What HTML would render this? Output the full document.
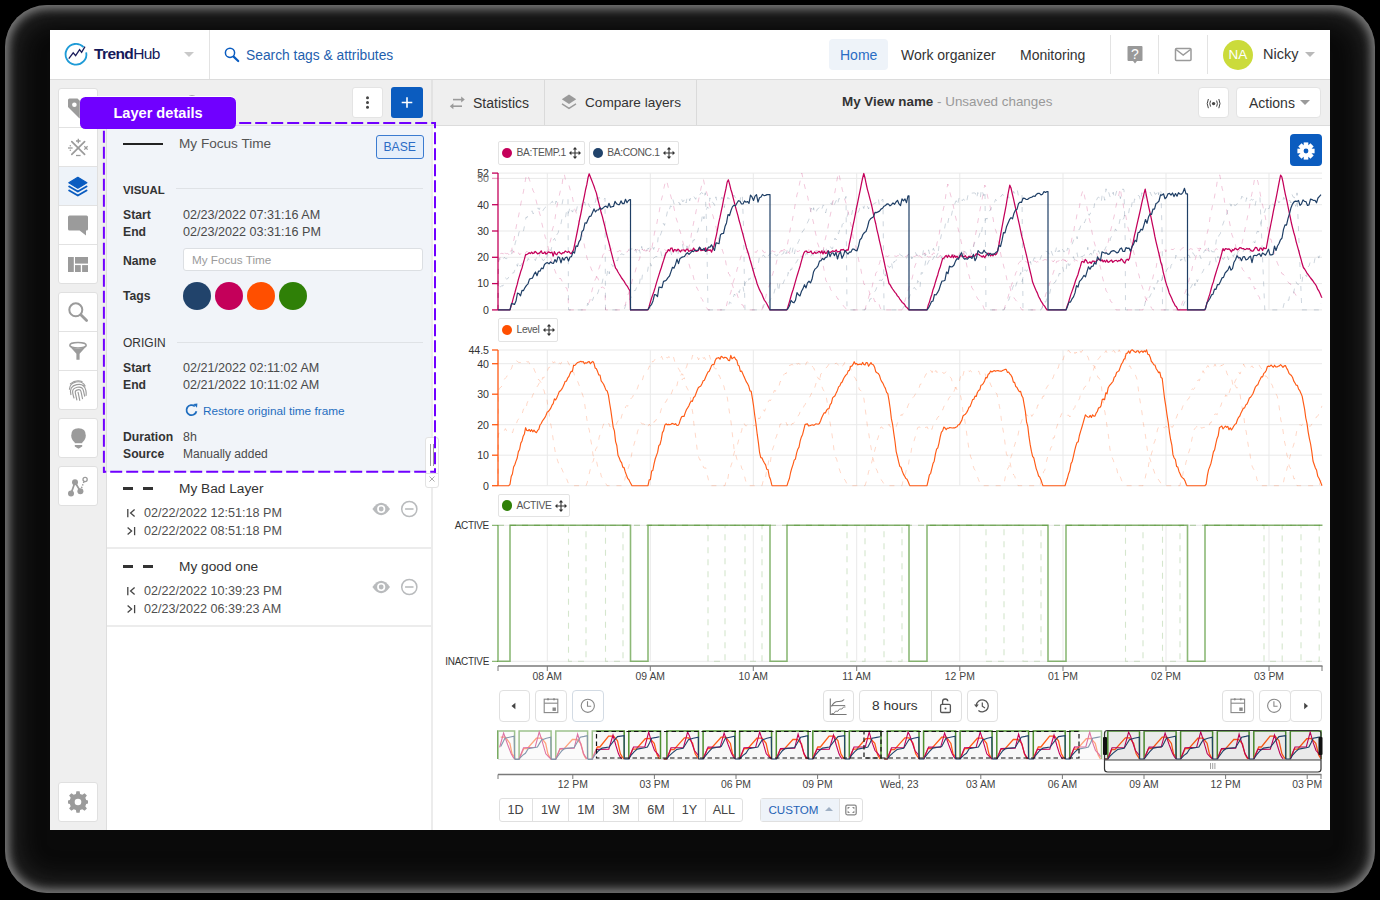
<!DOCTYPE html>
<html><head><meta charset="utf-8">
<style>
*{box-sizing:border-box;margin:0;padding:0}
html,body{width:1380px;height:900px;overflow:hidden;background:#000;font-family:"Liberation Sans",sans-serif;color:#333}
.a{position:absolute}
.t{position:absolute;white-space:nowrap}
.ring{left:5px;top:5px;width:1370px;height:888px;border-radius:42px;background:#0a0a0a;box-shadow:inset 0 0 8px 4px #7a7a7a,inset 0 0 30px 6px #323232}
.app{left:50px;top:30px;width:1280px;height:800px;background:#fff;box-shadow:none}
.hdr{left:50px;top:30px;width:1280px;height:50px;background:#fff;border-bottom:1px solid #dcdcdc}
.vd{position:absolute;width:1px;background:#e3e3e3}
.sb{left:50px;top:80px;width:57px;height:750px;background:#efefef}
.grp{position:absolute;left:58px;width:40px;background:#fff;border:1px solid #e0e0e0;border-radius:3px;overflow:hidden}
.grp .d{position:absolute;left:0;width:100%;height:1px;background:#e2e2e2}
.tb{left:431px;top:80px;width:899px;height:46px;background:#efefef;border-bottom:1px solid #dcdcdc;border-left:2px solid #e2e2e2}
.ph{left:107px;top:80px;width:325px;height:45px;background:#efefef}
.btn{position:absolute;background:#fff;border:1px solid #e0e0e0;border-radius:3px}
.lbl{font-weight:bold;color:#333;font-size:12.5px}
.val{color:#4a4a4a;font-size:12.6px}
</style></head><body>
<div class="a ring"></div>
<div class="a app"></div>

<!-- HEADER -->
<div class="a hdr"></div>
<svg class="a" style="left:62px;top:41px" width="28" height="28" viewBox="62 41 28 28">
  <path d="M83.6 47.2 A10.4 10.4 0 1 0 86.2 52.3" fill="none" stroke="#1e9bd7" stroke-width="1.8"/>
  <path d="M68.8 58.6 L73.2 52.8 L75.6 55.6 L79.6 49.6 L81.6 52.4 L85 46.6" fill="none" stroke="#1b1e5c" stroke-width="1.3" stroke-linejoin="miter"/>
</svg>
<div class="t" style="left:94px;top:45px;line-height:18px;font-size:15.5px;color:#15195a;letter-spacing:-0.6px"><b>Trend</b>Hub</div>
<svg class="a" style="left:183px;top:51px" width="12" height="7"><path d="M1 1 L11 1 L6 6Z" fill="#c9c9c9"/></svg>
<div class="vd" style="left:209px;top:30px;height:49px"></div>
<svg class="a" style="left:222px;top:44px" width="20" height="20" viewBox="222 44 20 20">
  <circle cx="230" cy="52.8" r="4.6" fill="none" stroke="#0a5cc0" stroke-width="1.5"/>
  <path d="M233.6 56.6 L238.2 61" stroke="#0a5cc0" stroke-width="2.2" stroke-linecap="round"/>
</svg>
<div class="t" style="left:246px;top:46px;line-height:20px;font-size:13.8px;color:#1f5fae">Search tags &amp; attributes</div>

<div class="a" style="left:829px;top:39px;width:59px;height:31px;background:#eef3f9;border-radius:4px"></div>
<div class="t" style="left:840px;top:45px;line-height:20px;font-size:14px;color:#2a6dc4">Home</div>
<div class="t" style="left:901px;top:45px;line-height:20px;font-size:14px;color:#333">Work organizer</div>
<div class="t" style="left:1020px;top:45px;line-height:20px;font-size:14px;color:#333">Monitoring</div>
<div class="vd" style="left:1110px;top:35px;height:39px"></div>
<div class="vd" style="left:1158px;top:35px;height:39px"></div>
<div class="vd" style="left:1207px;top:35px;height:39px"></div>
<svg class="a" style="left:1126px;top:45px" width="18" height="20" viewBox="1126 45 18 20">
  <path d="M1128.5 46 H1141.5 Q1142.5 46 1142.5 47 V60 Q1142.5 61 1141.5 61 H1137 L1135 63.5 L1133 61 H1128.5 Q1127.5 61 1127.5 60 V47 Q1127.5 46 1128.5 46Z" fill="#999"/>
  <text x="1135" y="59" font-size="14" fill="#fff" text-anchor="middle" font-family="Liberation Sans">?</text>
</svg>
<svg class="a" style="left:1173px;top:46px" width="20" height="18" viewBox="1173 46 20 18">
  <rect x="1175.5" y="48.5" width="15.5" height="12" rx="1" fill="none" stroke="#9a9a9a" stroke-width="1.5"/>
  <path d="M1176 49.5 L1183.2 55 L1190.5 49.5" fill="none" stroke="#9a9a9a" stroke-width="1.5"/>
</svg>
<div class="a" style="left:1223px;top:39.5px;width:30px;height:30px;border-radius:50%;background:#cbdb3b"></div>
<div class="t" style="left:1223px;top:45px;width:30px;text-align:center;line-height:20px;font-size:13.5px;color:#fff">NA</div>
<div class="t" style="left:1263px;top:44px;line-height:20px;font-size:14.5px;color:#333">Nicky</div>
<svg class="a" style="left:1304px;top:51px" width="12" height="7"><path d="M1 1 L11 1 L6 6Z" fill="#b9b9b9"/></svg>

<!-- SIDEBAR -->
<div class="a sb"></div>
<div class="vd" style="left:106px;top:125px;height:705px;background:#dedede"></div>
<div class="grp" style="top:88px;height:196px"><div class="a" style="left:0;top:78px;width:100%;height:39px;background:#eef3f9"></div><div class="d" style="top:38px"></div><div class="d" style="top:77px"></div><div class="d" style="top:116px"></div><div class="d" style="top:155px"></div></div>
<div class="grp" style="top:292px;height:118px"><div class="d" style="top:38px"></div><div class="d" style="top:77px"></div></div>
<div class="grp" style="top:418px;height:40px"></div>
<div class="grp" style="top:466px;height:40px"></div>
<div class="grp" style="top:782px;height:40px"></div>
<svg class="a" style="left:50px;top:80px" width="57" height="750" viewBox="50 80 57 750">
<path d="M68 100 Q68 98.5 69.5 98.5 L77.5 98.5 L88.5 109.5 L79.5 118.5 L68 107 Z" fill="#9b9b9b"/>
<circle cx="74.4" cy="104.8" r="2.3" fill="#fff"/>
<g stroke="#9b9b9b" stroke-width="1.7" fill="none" stroke-linecap="round">
<path d="M71.8 141.6 L84.6 154.4 M84.6 141.6 L71.8 154.4"/>
</g>
<g stroke="#9b9b9b" stroke-width="1.3" fill="none">
<path d="M76 141 H80.6 M78.3 138.7 V143.3"/>
<path d="M76 155.5 H80.6"/>
<path d="M68 148 H72.6"/>
<path d="M84.3 146.2 L87.6 149.6 M87.6 146.2 L84.3 149.6"/>
</g>
<circle cx="70.3" cy="145.8" r="0.75" fill="#9b9b9b"/><circle cx="70.3" cy="150.2" r="0.75" fill="#9b9b9b"/>
<path d="M77.85 177.3 L86.9 182.7 L77.85 188.2 L68.8 182.7 Z" fill="#0a5cc0" stroke="#0a5cc0" stroke-width="1.2" stroke-linejoin="round"/>
<path d="M69.2 186.5 L77.85 191.5 L86.5 186.5" fill="none" stroke="#0a5cc0" stroke-width="2" stroke-linecap="round" stroke-linejoin="round"/>
<path d="M69.2 190.5 L77.85 195.5 L86.5 190.5" fill="none" stroke="#0a5cc0" stroke-width="2" stroke-linecap="round" stroke-linejoin="round"/>
<path d="M69.5 215.5 H86.5 Q88 215.5 88 217 V229 Q88 230.5 86.5 230.5 H86 V235.4 L79.6 230.5 H69.5 Q68 230.5 68 229 V217 Q68 215.5 69.5 215.5Z" fill="#9b9b9b"/>
<rect x="68" y="257" width="5.8" height="15" fill="#9b9b9b"/>
<rect x="75" y="257" width="13" height="6.6" fill="#9b9b9b"/>
<rect x="75" y="265.1" width="5.8" height="6.9" fill="#9b9b9b"/>
<rect x="82.1" y="265.1" width="5.9" height="6.9" fill="#9b9b9b"/>
<circle cx="75.8" cy="309.8" r="6.5" fill="none" stroke="#9b9b9b" stroke-width="2"/>
<path d="M80.8 314.8 L86.6 320.6" stroke="#9b9b9b" stroke-width="2.8" stroke-linecap="round"/>
<path d="M69.4 346 L76.4 353.8 V359.8 H79.6 V353.8 L86.6 346 Q78 351.5 69.4 346Z" fill="#9b9b9b"/>
<ellipse cx="78" cy="345.3" rx="8.2" ry="2.7" fill="#fff" stroke="#9b9b9b" stroke-width="1.5"/>
<g fill="none" stroke="#9b9b9b" stroke-width="1.15" stroke-linecap="round" transform="rotate(-12 78 391)">
<path d="M72 382.5 Q78 379 84 382.5"/>
<path d="M70 387.5 Q71.5 381.8 78 381.8 Q84.5 381.8 86 387.5"/>
<path d="M70.3 393 Q70 384.5 78 384.5 Q85.8 384.5 85.8 392 Q85.8 395 85 397"/>
<path d="M72.6 397 Q72.4 395 72.4 392 Q72.4 387.2 78 387.2 Q83.4 387.2 83.4 392 V397.5"/>
<path d="M75 399.5 V392 Q75 389.8 78 389.8 Q80.8 389.8 80.8 392 V399.5"/>
<path d="M77.8 392.4 V400.5"/>
</g>
<path d="M78.5 428.2 Q85.8 428.2 85.8 435.4 Q85.8 439.2 82.2 442.6 H74.8 Q71.2 439.2 71.2 435.4 Q71.2 428.2 78.5 428.2Z" fill="#9b9b9b"/>
<rect x="74.8" y="442" width="7.4" height="1.2" fill="#9b9b9b"/>
<path d="M74.8 445 H82.2 V446.6 L78.5 448.8 L74.8 446.6Z" fill="#9b9b9b"/>
<path d="M71 493.6 L75 482.2 L80.4 491.2" fill="none" stroke="#9b9b9b" stroke-width="1.7"/>
<path d="M81.5 488 L84 481.5" fill="none" stroke="#9b9b9b" stroke-width="1.5" stroke-dasharray="1.4 1.3"/>
<circle cx="71" cy="493.6" r="3" fill="#9b9b9b"/>
<circle cx="75" cy="482.2" r="3" fill="#9b9b9b"/>
<circle cx="80.4" cy="491.2" r="3" fill="#9b9b9b"/>
<circle cx="85.1" cy="479.5" r="2.1" fill="none" stroke="#9b9b9b" stroke-width="1.3"/>
<g transform="translate(78 802)">
<path d="M-1.6 -9.5 H1.6 L2.1 -6.8 L4.3 -5.9 L6.6 -7.5 L8.9 -5.2 L7.3 -2.9 L8.2 -0.7 L10 -0.3 V2.9 L8.2 3.3 L7.3 5.5 L8.9 7.8 L6.6 10.1 L4.3 8.5 L2.1 9.4 L1.6 12 H-1.6 L-2.1 9.4 L-4.3 8.5 L-6.6 10.1 L-8.9 7.8 L-7.3 5.5 L-8.2 3.3 L-10 2.9 V-0.3 L-8.2 -0.7 L-7.3 -2.9 L-8.9 -5.2 L-6.6 -7.5 L-4.3 -5.9 L-2.1 -6.8Z" transform="translate(0 -1.3)" fill="#9b9b9b"/>
<circle cx="0" cy="0" r="3.3" fill="#fff"/>
</g>
</svg>

<!-- PANEL -->
<div class="a ph"></div>
<div class="a" style="left:107px;top:125px;width:325px;height:347px;background:#f1f4f9"></div>
<div class="a" style="left:107px;top:125px;width:325px;height:1px;background:#dedede"></div>
<div class="a" style="left:107px;top:472px;width:325px;height:358px;background:#fff"></div>
<div class="vd" style="left:431px;top:125px;width:2px;height:705px;background:#ececec"></div>
<div class="a" style="left:186px;top:94.5px;width:12px;height:12px;border-radius:50%;background:#a8a8a8"></div>
<div class="btn" style="left:352px;top:87px;width:31px;height:31px;border-color:#e4e4e4"></div>
<svg class="a" style="left:352px;top:87px" width="31" height="31"><circle cx="15.5" cy="10.8" r="1.5" fill="#444"/><circle cx="15.5" cy="15.5" r="1.5" fill="#444"/><circle cx="15.5" cy="20.2" r="1.5" fill="#444"/></svg>
<div class="a" style="left:391px;top:87px;width:32px;height:31px;background:#0b5cbf;border-radius:3px"></div>
<svg class="a" style="left:391px;top:87px" width="32" height="31"><path d="M16 10.2 V20.8 M10.7 15.5 H21.3" stroke="#fff" stroke-width="1.6"/></svg>
<div class="a" style="left:376px;top:134.5px;width:47.5px;height:24px;border:1.5px solid #3b7bd0;border-radius:3px;background:#e5eefa"></div>
<div class="t" style="left:376px;top:137.5px;line-height:18px;font-size:12.2px;color:#2b6cc5;width:47.5px;text-align:center;">BASE</div>
<div class="a" style="left:123px;top:142.5px;width:40px;height:2px;background:#222"></div>
<div class="t" style="left:179px;top:135.0px;line-height:18px;font-size:13.6px;color:#555;">My Focus Time</div>
<div class="t" style="left:123px;top:180.5px;line-height:18px;font-size:11.4px;color:#333;font-weight:bold;">VISUAL</div>
<div class="a" style="left:176px;top:188px;width:247px;height:1px;background:#dfe2e6"></div>
<div class="t" style="left:123px;top:206.0px;line-height:18px;font-size:12.2px;color:#333;font-weight:bold;">Start</div>
<div class="t" style="left:183px;top:206.0px;line-height:18px;font-size:12.6px;color:#4a4a4a;">02/23/2022 07:31:16 AM</div>
<div class="t" style="left:123px;top:223.0px;line-height:18px;font-size:12.2px;color:#333;font-weight:bold;">End</div>
<div class="t" style="left:183px;top:223.0px;line-height:18px;font-size:12.6px;color:#4a4a4a;">02/23/2022 03:31:16 PM</div>
<div class="t" style="left:123px;top:252.0px;line-height:18px;font-size:12.2px;color:#333;font-weight:bold;">Name</div>
<div class="a" style="left:183px;top:248px;width:240px;height:23px;background:#fff;border:1px solid #dcdfe3;border-radius:3px"></div>
<div class="t" style="left:192px;top:251.0px;line-height:18px;font-size:11.7px;color:#9b9b9b;">My Focus Time</div>
<div class="t" style="left:123px;top:287.0px;line-height:18px;font-size:12.2px;color:#333;font-weight:bold;">Tags</div>
<div class="a" style="left:183px;top:282px;width:28px;height:28px;border-radius:50%;background:#21436b"></div>
<div class="a" style="left:215px;top:282px;width:28px;height:28px;border-radius:50%;background:#c4005a"></div>
<div class="a" style="left:247px;top:282px;width:28px;height:28px;border-radius:50%;background:#ff4f00"></div>
<div class="a" style="left:279px;top:282px;width:28px;height:28px;border-radius:50%;background:#2f8007"></div>
<div class="t" style="left:123px;top:333.5px;line-height:18px;font-size:12px;color:#333;">ORIGIN</div>
<div class="a" style="left:177px;top:341.5px;width:246px;height:1px;background:#dfe2e6"></div>
<div class="t" style="left:123px;top:359.0px;line-height:18px;font-size:12.2px;color:#333;font-weight:bold;">Start</div>
<div class="t" style="left:183px;top:359.0px;line-height:18px;font-size:12.6px;color:#4a4a4a;">02/21/2022 02:11:02 AM</div>
<div class="t" style="left:123px;top:376.0px;line-height:18px;font-size:12.2px;color:#333;font-weight:bold;">End</div>
<div class="t" style="left:183px;top:376.0px;line-height:18px;font-size:12.6px;color:#4a4a4a;">02/21/2022 10:11:02 AM</div>
<svg class="a" style="left:183px;top:402px" width="18" height="18" viewBox="183 402 18 18"><path d="M196.4 411.2 A5 5 0 1 1 194.8 406.4" fill="none" stroke="#1f6dbf" stroke-width="1.8"/><path d="M193.4 404 L197.4 403.6 L197 407.8Z" fill="#1f6dbf"/></svg>
<div class="t" style="left:203px;top:401.5px;line-height:18px;font-size:11.8px;color:#1f6dbf;">Restore original time frame</div>
<div class="t" style="left:123px;top:427.5px;line-height:18px;font-size:12.2px;color:#333;font-weight:bold;">Duration</div>
<div class="t" style="left:183px;top:427.5px;line-height:18px;font-size:12.4px;color:#4a4a4a;">8h</div>
<div class="t" style="left:123px;top:444.5px;line-height:18px;font-size:12.2px;color:#333;font-weight:bold;">Source</div>
<div class="t" style="left:183px;top:444.5px;line-height:18px;font-size:12px;color:#4a4a4a;">Manually added</div>
<div class="a" style="left:425px;top:437px;width:14px;height:51px;background:#fff;border:1px solid #e3e3e3;border-radius:3px"></div>
<div class="a" style="left:425px;top:473px;width:14px;height:1px;background:#e3e3e3"></div>
<svg class="a" style="left:425px;top:437px" width="14" height="51"><path d="M5.5 7 V29 M8.5 7 V29" stroke="#999" stroke-width="1"/><path d="M4.5 39.5 L9.5 44.5 M9.5 39.5 L4.5 44.5" stroke="#aaa" stroke-width="1"/></svg>
<div class="a" style="left:123px;top:487.3px;width:10px;height:2.4px;background:#333"></div>
<div class="a" style="left:143px;top:487.3px;width:10px;height:2.4px;background:#333"></div>
<div class="t" style="left:179px;top:479.5px;line-height:18px;font-size:13.7px;color:#333;">My Bad Layer</div>
<svg class="a" style="left:124px;top:506.5px" width="14" height="12"><path d="M3.8 2 V10.2" stroke="#444" stroke-width="1.3"/><path d="M10.6 2.6 L6.6 6.1 L10.6 9.6" fill="none" stroke="#444" stroke-width="1.3"/></svg>
<svg class="a" style="left:124px;top:524.8px" width="14" height="12"><path d="M10.6 2 V10.2" stroke="#444" stroke-width="1.3"/><path d="M3.6 2.6 L7.6 6.1 L3.6 9.6" fill="none" stroke="#444" stroke-width="1.3"/></svg>
<div class="t" style="left:144px;top:503.5px;line-height:18px;font-size:12.6px;color:#4f4f4f;">02/22/2022 12:51:18 PM</div>
<div class="t" style="left:144px;top:521.8px;line-height:18px;font-size:12.6px;color:#4f4f4f;">02/22/2022 08:51:18 PM</div>
<svg class="a" style="left:370px;top:499px" width="52" height="20" viewBox="370 499 52 20"><path d="M372.4 509 Q381.2 496.5 390 509 Q381.2 521.5 372.4 509Z" fill="#b9bbbd"/><circle cx="381.2" cy="509" r="4.1" fill="#fff"/><circle cx="381.2" cy="509" r="2.4" fill="#b9bbbd"/><circle cx="409.3" cy="509" r="7.6" fill="none" stroke="#b9bbbd" stroke-width="1.5"/><path d="M405.1 509 H413.5" stroke="#b9bbbd" stroke-width="1.6"/></svg>
<div class="a" style="left:107px;top:547px;width:324px;height:2px;background:#ececec"></div>
<div class="a" style="left:123px;top:565.3px;width:10px;height:2.4px;background:#333"></div>
<div class="a" style="left:143px;top:565.3px;width:10px;height:2.4px;background:#333"></div>
<div class="t" style="left:179px;top:557.5px;line-height:18px;font-size:13.7px;color:#333;">My good one</div>
<svg class="a" style="left:124px;top:584.5px" width="14" height="12"><path d="M3.8 2 V10.2" stroke="#444" stroke-width="1.3"/><path d="M10.6 2.6 L6.6 6.1 L10.6 9.6" fill="none" stroke="#444" stroke-width="1.3"/></svg>
<svg class="a" style="left:124px;top:602.8px" width="14" height="12"><path d="M10.6 2 V10.2" stroke="#444" stroke-width="1.3"/><path d="M3.6 2.6 L7.6 6.1 L3.6 9.6" fill="none" stroke="#444" stroke-width="1.3"/></svg>
<div class="t" style="left:144px;top:581.5px;line-height:18px;font-size:12.6px;color:#4f4f4f;">02/22/2022 10:39:23 PM</div>
<div class="t" style="left:144px;top:599.8px;line-height:18px;font-size:12.6px;color:#4f4f4f;">02/23/2022 06:39:23 AM</div>
<svg class="a" style="left:370px;top:577px" width="52" height="20" viewBox="370 577 52 20"><path d="M372.4 587 Q381.2 574.5 390 587 Q381.2 599.5 372.4 587Z" fill="#b9bbbd"/><circle cx="381.2" cy="587" r="4.1" fill="#fff"/><circle cx="381.2" cy="587" r="2.4" fill="#b9bbbd"/><circle cx="409.3" cy="587" r="7.6" fill="none" stroke="#b9bbbd" stroke-width="1.5"/><path d="M405.1 587 H413.5" stroke="#b9bbbd" stroke-width="1.6"/></svg>
<div class="a" style="left:107px;top:625px;width:324px;height:2px;background:#ececec"></div>

<!-- CHART TOOLBAR -->
<div class="a tb"></div>
<div class="vd" style="left:543.5px;top:80px;height:45px;background:#dadada"></div>
<div class="vd" style="left:695.5px;top:80px;height:45px;background:#dadada"></div>
<svg class="a" style="left:446px;top:94px" width="22" height="18" viewBox="446 94 22 18"><path d="M453 99.6 H463" stroke="#9a9a9a" stroke-width="1.6"/><path d="M464.8 99.6 L461.2 96.6 V102.6Z" fill="#9a9a9a"/><path d="M452.5 106.2 H462" stroke="#9a9a9a" stroke-width="1.6"/><path d="M449.8 106.2 L453.4 103.2 V109.2Z" fill="#9a9a9a"/></svg>
<div class="t" style="left:473px;top:93.5px;line-height:18px;font-size:14px;color:#333;">Statistics</div>
<svg class="a" style="left:558px;top:92px" width="22" height="20" viewBox="558 92 22 20"><path d="M569 94.4 L576.2 99.2 L569 104 L561.8 99.2Z" fill="#9a9a9a"/><path d="M562 103.8 L569 108.4 L576 103.8" fill="none" stroke="#9a9a9a" stroke-width="1.4"/></svg>
<div class="t" style="left:585px;top:93.5px;line-height:18px;font-size:13.6px;color:#333;">Compare layers</div>
<div class="t" style="left:842px;top:93.0px;line-height:18px;font-size:13.4px;color:#333;"><b>My View name</b> <span style="color:#999">- Unsaved changes</span></div>
<div class="a" style="left:1198px;top:87px;width:31px;height:31px;background:#fff;border:1px solid #e3e3e3;border-radius:4px"></div>
<svg class="a" style="left:1203px;top:94px" width="22" height="20" viewBox="1203 94 22 20"><circle cx="1213.6" cy="103.6" r="1.7" fill="#444"/><path d="M1210.6 100.6 Q1209 103.6 1210.6 106.6 M1216.6 100.6 Q1218.2 103.6 1216.6 106.6" fill="none" stroke="#444" stroke-width="1"/><path d="M1208.4 99 Q1206 103.6 1208.4 108.2 M1218.8 99 Q1221.2 103.6 1218.8 108.2" fill="none" stroke="#444" stroke-width="1"/></svg>
<div class="a" style="left:1236px;top:87px;width:85px;height:31px;background:#fff;border:1px solid #e3e3e3;border-radius:4px"></div>
<div class="t" style="left:1249px;top:93.5px;line-height:18px;font-size:14px;color:#333;">Actions</div>
<svg class="a" style="left:1299px;top:99px" width="12" height="7"><path d="M1 1 L11 1 L6 6Z" fill="#9a9a9a"/></svg>
<div class="a" style="left:1290px;top:134px;width:32px;height:32px;background:#0b5cbf;border-radius:4px"></div>
<svg class="a" style="left:1290px;top:134px" width="32" height="32" viewBox="-16 -17 32 32"><rect x="-2.3" y="-8.6" width="4.6" height="4" transform="rotate(0)" fill="#fff"/><rect x="-2.3" y="-8.6" width="4.6" height="4" transform="rotate(45)" fill="#fff"/><rect x="-2.3" y="-8.6" width="4.6" height="4" transform="rotate(90)" fill="#fff"/><rect x="-2.3" y="-8.6" width="4.6" height="4" transform="rotate(135)" fill="#fff"/><rect x="-2.3" y="-8.6" width="4.6" height="4" transform="rotate(180)" fill="#fff"/><rect x="-2.3" y="-8.6" width="4.6" height="4" transform="rotate(225)" fill="#fff"/><rect x="-2.3" y="-8.6" width="4.6" height="4" transform="rotate(270)" fill="#fff"/><rect x="-2.3" y="-8.6" width="4.6" height="4" transform="rotate(315)" fill="#fff"/><circle r="6.2" fill="#fff"/><circle r="2.4" fill="#0b5cbf"/></svg>

<svg class="a" style="left:432px;top:126px" width="898" height="704" viewBox="432 126 898 704" font-family="Liberation Sans">
<line x1="498.0" x2="1322.0" y1="173.1" y2="173.1" stroke="#e9e9e9" stroke-width="1"/>
<line x1="498.0" x2="1322.0" y1="178.4" y2="178.4" stroke="#e9e9e9" stroke-width="1"/>
<line x1="498.0" x2="1322.0" y1="204.7" y2="204.7" stroke="#e9e9e9" stroke-width="1"/>
<line x1="498.0" x2="1322.0" y1="231.0" y2="231.0" stroke="#e9e9e9" stroke-width="1"/>
<line x1="498.0" x2="1322.0" y1="257.3" y2="257.3" stroke="#e9e9e9" stroke-width="1"/>
<line x1="498.0" x2="1322.0" y1="283.6" y2="283.6" stroke="#e9e9e9" stroke-width="1"/>
<line x1="498.0" x2="1322.0" y1="309.9" y2="309.9" stroke="#e9e9e9" stroke-width="1"/>
<line x1="547.3" x2="547.3" y1="173.1" y2="309.9" stroke="#e9e9e9" stroke-width="1"/>
<line x1="650.3" x2="650.3" y1="173.1" y2="309.9" stroke="#e9e9e9" stroke-width="1"/>
<line x1="753.3" x2="753.3" y1="173.1" y2="309.9" stroke="#e9e9e9" stroke-width="1"/>
<line x1="856.7" x2="856.7" y1="173.1" y2="309.9" stroke="#e9e9e9" stroke-width="1"/>
<line x1="959.8" x2="959.8" y1="173.1" y2="309.9" stroke="#e9e9e9" stroke-width="1"/>
<line x1="1063" x2="1063" y1="173.1" y2="309.9" stroke="#e9e9e9" stroke-width="1"/>
<line x1="1166" x2="1166" y1="173.1" y2="309.9" stroke="#e9e9e9" stroke-width="1"/>
<line x1="1269" x2="1269" y1="173.1" y2="309.9" stroke="#e9e9e9" stroke-width="1"/>
<text x="489" y="176.9" font-size="10.6" fill="#333" text-anchor="end">52</text>
<line x1="492" x2="498" y1="173.1" y2="173.1" stroke="#c4005a" stroke-width="1.3" stroke-opacity="1"/>
<text x="489" y="182.2" font-size="10.6" fill="#777" text-anchor="end">50</text>
<line x1="492" x2="498" y1="178.4" y2="178.4" stroke="#c4005a" stroke-width="1.3" stroke-opacity="0.35"/>
<text x="489" y="208.5" font-size="10.6" fill="#333" text-anchor="end">40</text>
<line x1="492" x2="498" y1="204.7" y2="204.7" stroke="#c4005a" stroke-width="1.3" stroke-opacity="1"/>
<text x="489" y="234.8" font-size="10.6" fill="#333" text-anchor="end">30</text>
<line x1="492" x2="498" y1="231.0" y2="231.0" stroke="#c4005a" stroke-width="1.3" stroke-opacity="1"/>
<text x="489" y="261.1" font-size="10.6" fill="#333" text-anchor="end">20</text>
<line x1="492" x2="498" y1="257.3" y2="257.3" stroke="#c4005a" stroke-width="1.3" stroke-opacity="1"/>
<text x="489" y="287.4" font-size="10.6" fill="#333" text-anchor="end">10</text>
<line x1="492" x2="498" y1="283.6" y2="283.6" stroke="#c4005a" stroke-width="1.3" stroke-opacity="1"/>
<text x="489" y="313.7" font-size="10.6" fill="#333" text-anchor="end">0</text>
<line x1="492" x2="498" y1="309.9" y2="309.9" stroke="#c4005a" stroke-width="1.3" stroke-opacity="1"/>
<line x1="498.0" x2="1322.0" y1="350.0" y2="350.0" stroke="#e9e9e9" stroke-width="1"/>
<line x1="498.0" x2="1322.0" y1="363.7" y2="363.7" stroke="#e9e9e9" stroke-width="1"/>
<line x1="498.0" x2="1322.0" y1="394.2" y2="394.2" stroke="#e9e9e9" stroke-width="1"/>
<line x1="498.0" x2="1322.0" y1="424.7" y2="424.7" stroke="#e9e9e9" stroke-width="1"/>
<line x1="498.0" x2="1322.0" y1="455.2" y2="455.2" stroke="#e9e9e9" stroke-width="1"/>
<line x1="498.0" x2="1322.0" y1="485.7" y2="485.7" stroke="#e9e9e9" stroke-width="1"/>
<line x1="547.3" x2="547.3" y1="350.0" y2="485.7" stroke="#e9e9e9" stroke-width="1"/>
<line x1="650.3" x2="650.3" y1="350.0" y2="485.7" stroke="#e9e9e9" stroke-width="1"/>
<line x1="753.3" x2="753.3" y1="350.0" y2="485.7" stroke="#e9e9e9" stroke-width="1"/>
<line x1="856.7" x2="856.7" y1="350.0" y2="485.7" stroke="#e9e9e9" stroke-width="1"/>
<line x1="959.8" x2="959.8" y1="350.0" y2="485.7" stroke="#e9e9e9" stroke-width="1"/>
<line x1="1063" x2="1063" y1="350.0" y2="485.7" stroke="#e9e9e9" stroke-width="1"/>
<line x1="1166" x2="1166" y1="350.0" y2="485.7" stroke="#e9e9e9" stroke-width="1"/>
<line x1="1269" x2="1269" y1="350.0" y2="485.7" stroke="#e9e9e9" stroke-width="1"/>
<text x="489" y="353.8" font-size="10.6" fill="#333" text-anchor="end">44.5</text>
<line x1="492" x2="498" y1="350.0" y2="350.0" stroke="#ff5a14" stroke-width="1.3"/>
<text x="489" y="367.5" font-size="10.6" fill="#333" text-anchor="end">40</text>
<line x1="492" x2="498" y1="363.7" y2="363.7" stroke="#ff5a14" stroke-width="1.3"/>
<text x="489" y="398.0" font-size="10.6" fill="#333" text-anchor="end">30</text>
<line x1="492" x2="498" y1="394.2" y2="394.2" stroke="#ff5a14" stroke-width="1.3"/>
<text x="489" y="428.5" font-size="10.6" fill="#333" text-anchor="end">20</text>
<line x1="492" x2="498" y1="424.7" y2="424.7" stroke="#ff5a14" stroke-width="1.3"/>
<text x="489" y="459.0" font-size="10.6" fill="#333" text-anchor="end">10</text>
<line x1="492" x2="498" y1="455.2" y2="455.2" stroke="#ff5a14" stroke-width="1.3"/>
<text x="489" y="489.5" font-size="10.6" fill="#333" text-anchor="end">0</text>
<line x1="492" x2="498" y1="485.7" y2="485.7" stroke="#ff5a14" stroke-width="1.3"/>
<line x1="498.0" x2="1322.0" y1="525.3" y2="525.3" stroke="#e9e9e9" stroke-width="1"/>
<line x1="498.0" x2="1322.0" y1="661.3" y2="661.3" stroke="#e9e9e9" stroke-width="1"/>
<line x1="547.3" x2="547.3" y1="525.3" y2="661.3" stroke="#e9e9e9" stroke-width="1"/>
<line x1="650.3" x2="650.3" y1="525.3" y2="661.3" stroke="#e9e9e9" stroke-width="1"/>
<line x1="753.3" x2="753.3" y1="525.3" y2="661.3" stroke="#e9e9e9" stroke-width="1"/>
<line x1="856.7" x2="856.7" y1="525.3" y2="661.3" stroke="#e9e9e9" stroke-width="1"/>
<line x1="959.8" x2="959.8" y1="525.3" y2="661.3" stroke="#e9e9e9" stroke-width="1"/>
<line x1="1063" x2="1063" y1="525.3" y2="661.3" stroke="#e9e9e9" stroke-width="1"/>
<line x1="1166" x2="1166" y1="525.3" y2="661.3" stroke="#e9e9e9" stroke-width="1"/>
<line x1="1269" x2="1269" y1="525.3" y2="661.3" stroke="#e9e9e9" stroke-width="1"/>
<path d="M492 525.3 H498 M492 661.3 H498" stroke="#2f8007" stroke-opacity="0.55" stroke-width="1.3"/>
<text x="489" y="528.9" font-size="10" letter-spacing="-0.3" fill="#333" text-anchor="end">ACTIVE</text>
<text x="489" y="664.9" font-size="10" letter-spacing="-0.3" fill="#333" text-anchor="end">INACTIVE</text>
<line x1="498.0" x2="1322.5" y1="666" y2="666" stroke="#7a7a7a" stroke-width="1.4"/>
<line x1="498.0" x2="498.0" y1="666" y2="671" stroke="#7a7a7a" stroke-width="1"/>
<line x1="547.3" x2="547.3" y1="666" y2="671" stroke="#7a7a7a" stroke-width="1"/>
<line x1="650.3" x2="650.3" y1="666" y2="671" stroke="#7a7a7a" stroke-width="1"/>
<line x1="753.3" x2="753.3" y1="666" y2="671" stroke="#7a7a7a" stroke-width="1"/>
<line x1="856.7" x2="856.7" y1="666" y2="671" stroke="#7a7a7a" stroke-width="1"/>
<line x1="959.8" x2="959.8" y1="666" y2="671" stroke="#7a7a7a" stroke-width="1"/>
<line x1="1063" x2="1063" y1="666" y2="671" stroke="#7a7a7a" stroke-width="1"/>
<line x1="1166" x2="1166" y1="666" y2="671" stroke="#7a7a7a" stroke-width="1"/>
<line x1="1269" x2="1269" y1="666" y2="671" stroke="#7a7a7a" stroke-width="1"/>
<line x1="1322.0" x2="1322.0" y1="666" y2="671" stroke="#7a7a7a" stroke-width="1"/>
<text x="547.3" y="680" font-size="10.4" fill="#444" text-anchor="middle">08 AM</text>
<text x="650.3" y="680" font-size="10.4" fill="#444" text-anchor="middle">09 AM</text>
<text x="753.3" y="680" font-size="10.4" fill="#444" text-anchor="middle">10 AM</text>
<text x="856.7" y="680" font-size="10.4" fill="#444" text-anchor="middle">11 AM</text>
<text x="959.8" y="680" font-size="10.4" fill="#444" text-anchor="middle">12 PM</text>
<text x="1063" y="680" font-size="10.4" fill="#444" text-anchor="middle">01 PM</text>
<text x="1166" y="680" font-size="10.4" fill="#444" text-anchor="middle">02 PM</text>
<text x="1269" y="680" font-size="10.4" fill="#444" text-anchor="middle">03 PM</text>
<path d="M498.0 309.9 L498.2 263.1 L499.4 259.7 L500.6 255.9 L501.8 254.6 L503.0 254.2 L504.2 252.7 L505.4 253.3 L506.6 253.7 L507.8 253.5 L509.0 254.7 L510.2 251.9 L511.4 254.5 L512.6 253.1 L513.8 250.9 L515.0 255.8 L516.2 254.6 L517.4 253.8 L518.6 252.9 L519.8 254.8 L521.0 253.3 L522.2 253.0 L523.4 252.8 L524.6 255.5 L525.8 252.3 L527.0 251.2 L528.2 252.4 L529.4 253.6 L530.6 253.5 L531.8 255.6 L533.0 252.3 L534.2 251.2 L535.4 252.1 L536.6 255.9 L537.8 253.2 L539.0 252.8 L540.2 253.2 L541.4 251.6 L542.6 254.5 L543.8 253.4 L545.0 252.0 L546.2 251.6 L547.4 252.4 L548.6 248.5 L549.8 243.1 L551.0 238.8 L552.2 230.4 L553.4 226.3 L554.6 221.5 L555.8 213.4 L557.0 206.0 L558.2 200.9 L559.4 194.9 L560.6 189.8 L561.8 186.7 L563.0 177.4 L564.2 173.5 L565.4 179.7 L566.6 180.9 L567.8 184.3 L569.0 185.5 L570.2 189.8 L571.4 193.3 L572.6 198.1 L573.8 204.5 L575.0 209.9 L576.2 212.5 L577.4 217.6 L578.6 222.1 L579.8 227.0 L581.0 232.1 L582.2 235.7 L583.4 240.8 L584.6 246.4 L585.8 252.5 L587.0 257.9 L588.2 261.4 L589.4 264.8 L590.6 267.0 L591.8 270.4 L593.0 271.1 L594.2 272.5 L595.4 273.2 L596.6 277.3 L597.8 277.9 L599.0 281.2 L600.2 284.6 L601.4 287.6 L602.6 286.9 L603.8 288.2 L605.0 288.4 L605.5 309.9 L623.0 309.9 L624.2 306.2 L625.4 304.8 L626.6 298.0 L627.8 295.0 L629.0 292.1 L630.2 285.2 L631.4 283.8 L632.6 278.8 L633.8 275.8 L635.0 272.4 L636.2 268.1 L637.4 263.2 L638.6 261.0 L639.8 258.2 L641.0 250.7 L642.2 249.0 L643.4 250.5 L644.6 249.6 L645.8 251.2 L647.0 249.6 L648.2 248.7 L649.4 251.7 L650.6 248.7 L651.8 248.8 L653.0 250.0 L654.2 249.7 L655.4 250.1 L656.6 250.3 L657.8 251.8 L659.0 248.2 L660.2 250.6 L661.4 249.8 L662.6 250.2 L663.8 249.6 L665.0 249.5 L666.2 251.2 L667.4 249.8 L668.6 250.5 L669.8 251.1 L671.0 248.9 L672.2 249.0 L673.4 251.3 L674.6 250.7 L675.8 251.4 L677.0 251.6 L678.2 251.5 L679.4 249.9 L680.6 252.0 L681.8 252.1 L683.0 250.3 L684.2 251.4 L685.4 249.4 L686.6 251.7 L687.8 251.2 L689.0 246.7 L690.2 242.6 L691.4 234.0 L692.6 227.8 L693.8 221.8 L695.0 217.2 L696.2 210.5 L697.4 205.6 L698.6 199.7 L699.8 194.7 L701.0 188.2 L702.2 183.2 L703.4 179.3 L704.6 185.2 L705.8 190.1 L707.0 193.6 L708.2 198.1 L709.4 204.4 L710.6 208.3 L711.8 212.3 L713.0 215.8 L714.2 220.2 L715.4 224.5 L716.6 230.1 L717.8 235.2 L719.0 240.4 L720.2 242.9 L721.4 247.6 L722.6 250.8 L723.8 254.4 L725.0 257.4 L726.2 264.6 L727.4 267.2 L728.6 273.7 L729.8 274.9 L731.0 281.4 L732.2 284.2 L733.4 287.9 L734.6 287.8 L735.8 291.6 L737.0 293.9 L738.2 297.7 L739.4 299.7 L740.6 303.3 L741.8 304.8 L743.0 305.0 L744.2 308.5 L745.0 309.9 L762.0 309.9 L763.2 304.7 L764.4 301.1 L765.6 297.7 L766.8 292.3 L768.0 290.0 L769.2 285.7 L770.4 283.3 L771.6 277.2 L772.8 273.8 L774.0 269.4 L775.2 267.8 L776.4 262.6 L777.6 257.4 L778.8 254.5 L780.0 251.9 L781.2 250.3 L782.4 252.5 L783.6 251.9 L784.8 252.8 L786.0 252.8 L787.2 253.8 L788.4 251.7 L789.6 253.6 L790.8 252.7 L792.0 252.7 L793.2 253.3 L794.4 252.8 L795.6 252.1 L796.8 250.8 L798.0 251.9 L799.2 250.5 L800.4 251.5 L801.6 251.6 L802.8 251.2 L804.0 252.0 L805.2 250.7 L806.4 251.4 L807.6 251.4 L808.8 249.6 L810.0 252.3 L811.2 252.4 L812.4 251.4 L813.6 251.0 L814.8 251.5 L816.0 250.2 L817.2 250.7 L818.4 250.7 L819.6 252.3 L820.8 249.2 L822.0 250.8 L823.2 250.8 L824.4 242.5 L825.6 237.9 L826.8 232.7 L828.0 227.1 L829.2 220.0 L830.4 214.7 L831.6 209.1 L832.8 202.2 L834.0 196.3 L835.2 190.7 L836.4 183.2 L837.6 176.7 L838.8 172.5 L840.0 179.3 L841.2 184.3 L842.4 190.3 L843.6 193.8 L844.8 199.5 L846.0 203.2 L847.2 208.6 L848.4 213.0 L849.6 219.1 L850.8 224.0 L852.0 229.2 L853.2 237.7 L854.4 241.7 L855.6 245.7 L856.8 251.4 L858.0 256.6 L859.2 262.7 L860.4 266.8 L861.6 273.4 L862.8 278.6 L864.0 284.3 L865.2 284.7 L866.4 286.3 L867.6 288.9 L868.8 290.2 L870.0 294.4 L871.2 293.0 L872.4 297.8 L873.6 298.1 L874.8 301.7 L876.0 301.3 L877.2 302.7 L878.4 301.3 L879.6 306.1 L880.8 309.0 L882.0 307.6 L883.2 309.0 L884.0 309.9 L902.0 309.9 L903.2 307.9 L904.4 302.5 L905.6 298.5 L906.8 294.1 L908.0 290.6 L909.2 286.5 L910.4 282.1 L911.6 280.3 L912.8 275.5 L914.0 269.1 L915.2 265.3 L916.4 262.4 L917.6 258.1 L918.8 256.2 L920.0 255.7 L921.2 257.2 L922.4 257.8 L923.6 255.8 L924.8 257.3 L926.0 257.8 L927.2 256.2 L928.4 257.0 L929.6 256.8 L930.8 256.8 L932.0 255.8 L933.2 256.4 L934.4 256.4 L935.6 257.9 L936.8 257.9 L938.0 257.5 L939.2 256.9 L940.4 255.0 L941.6 256.7 L942.8 256.5 L944.0 253.9 L945.2 255.6 L946.4 256.3 L947.6 255.1 L948.8 255.6 L950.0 254.1 L951.2 254.8 L952.4 256.4 L953.6 254.2 L954.8 256.6 L956.0 253.2 L957.2 254.6 L958.4 257.3 L959.6 252.7 L960.8 255.7 L962.0 257.3 L963.2 252.8 L964.4 255.7 L965.6 254.9 L966.8 254.9 L968.0 254.5 L969.2 253.9 L970.4 256.4 L971.6 251.7 L972.8 249.3 L974.0 243.5 L975.2 236.3 L976.4 230.3 L977.6 223.0 L978.8 216.6 L980.0 209.9 L981.2 203.7 L982.4 197.8 L983.6 190.9 L984.8 185.0 L986.0 187.3 L987.2 194.6 L988.4 200.0 L989.6 202.8 L990.8 210.7 L992.0 213.9 L993.2 218.8 L994.4 227.3 L995.6 229.9 L996.8 233.7 L998.0 241.2 L999.2 244.1 L1000.4 252.1 L1001.6 258.5 L1002.8 262.3 L1004.0 267.4 L1005.2 270.7 L1006.4 277.1 L1007.6 282.8 L1008.8 286.3 L1010.0 286.9 L1011.2 293.0 L1012.4 295.2 L1013.6 297.0 L1014.8 299.2 L1016.0 300.3 L1017.2 301.6 L1018.4 305.4 L1019.6 305.9 L1020.8 308.1 L1022.0 309.9 L1041.0 309.9 L1042.2 307.9 L1043.4 301.6 L1044.6 298.9 L1045.8 294.1 L1047.0 290.8 L1048.2 290.0 L1049.4 283.7 L1050.6 281.2 L1051.8 277.7 L1053.0 273.5 L1054.2 270.0 L1055.4 265.9 L1056.6 261.4 L1057.8 261.2 L1059.0 260.9 L1060.2 259.6 L1061.4 261.4 L1062.6 260.7 L1063.8 261.0 L1065.0 259.8 L1066.2 262.0 L1067.4 260.7 L1068.6 259.9 L1069.8 260.6 L1071.0 260.3 L1072.2 261.0 L1073.4 260.3 L1074.6 261.0 L1075.8 259.9 L1077.0 260.8 L1078.2 261.2 L1079.4 260.7 L1080.6 261.2 L1081.8 257.9 L1083.0 260.0 L1084.2 260.5 L1085.4 260.9 L1086.6 259.7 L1087.8 261.1 L1089.0 261.0 L1090.2 261.2 L1091.4 260.9 L1092.6 260.9 L1093.8 261.6 L1095.0 260.2 L1096.2 261.7 L1097.4 259.9 L1098.6 259.3 L1099.8 261.1 L1101.0 261.0 L1102.2 259.3 L1103.4 261.0 L1104.6 257.6 L1105.8 252.4 L1107.0 247.2 L1108.2 242.4 L1109.4 235.6 L1110.6 230.8 L1111.8 225.9 L1113.0 220.5 L1114.2 216.0 L1115.4 208.8 L1116.6 203.6 L1117.8 197.1 L1119.0 194.1 L1120.2 187.9 L1121.4 195.4 L1122.6 199.9 L1123.8 208.8 L1125.0 212.5 L1126.2 217.9 L1127.4 225.9 L1128.6 229.5 L1129.8 234.7 L1131.0 242.4 L1132.2 245.5 L1133.4 251.1 L1134.6 255.6 L1135.8 262.1 L1137.0 267.9 L1138.2 272.3 L1139.4 276.7 L1140.6 284.2 L1141.8 285.3 L1143.0 288.8 L1144.2 292.1 L1145.4 298.2 L1146.6 299.5 L1147.8 301.1 L1149.0 303.4 L1150.2 304.6 L1151.4 308.1 L1152.6 309.2 L1153.0 309.9 L1180.0 309.9 L1181.2 306.2 L1182.4 302.5 L1183.6 299.7 L1184.8 293.3 L1186.0 290.3 L1187.2 284.0 L1188.4 282.4 L1189.6 277.6 L1190.8 274.3 L1192.0 269.3 L1193.2 262.7 L1194.4 261.9 L1195.6 258.4 L1196.8 253.0 L1198.0 249.1 L1199.2 251.2 L1200.4 248.4 L1201.6 250.5 L1202.8 248.4 L1204.0 249.2 L1205.2 249.9 L1206.4 248.9 L1207.6 250.0 L1208.8 250.7 L1210.0 249.9 L1211.2 249.4 L1212.4 250.6 L1213.6 249.2 L1214.8 250.4 L1216.0 248.6 L1217.2 249.3 L1218.4 249.6 L1219.6 251.7 L1220.8 248.9 L1222.0 251.4 L1223.2 249.9 L1224.4 250.7 L1225.6 247.6 L1226.8 249.3 L1228.0 248.9 L1229.2 248.5 L1230.4 249.5 L1231.6 248.4 L1232.8 250.5 L1234.0 248.1 L1235.2 248.4 L1236.4 249.0 L1237.6 251.1 L1238.8 250.9 L1240.0 250.2 L1241.2 248.5 L1242.4 241.3 L1243.6 236.1 L1244.8 230.1 L1246.0 223.8 L1247.2 218.4 L1248.4 212.4 L1249.6 205.9 L1250.8 198.6 L1252.0 193.3 L1253.2 187.0 L1254.4 179.8 L1255.6 176.9 L1256.8 178.1 L1258.0 182.2 L1259.2 188.2 L1260.4 194.8 L1261.6 201.6 L1262.8 205.7 L1264.0 211.4 L1265.2 216.2 L1266.4 223.7 L1267.6 227.8 L1268.8 234.0 L1270.0 239.0 L1271.2 239.5 L1272.4 246.4 L1273.6 249.5 L1274.8 254.2 L1276.0 259.2 L1277.2 262.5 L1278.4 265.4 L1279.6 269.5 L1280.8 270.7 L1282.0 273.9 L1283.2 274.1 L1284.4 275.6 L1285.6 278.3 L1286.8 280.0 L1288.0 282.0 L1289.2 283.3 L1290.4 283.7 L1291.6 287.1 L1292.8 289.5 L1294.0 292.7 L1295.2 293.7 L1296.4 296.3 L1297.0 298.2" fill="none" stroke="#c4005a" stroke-width="1" stroke-opacity="0.22" stroke-dasharray="5 7"/>
<path d="M498.0 309.9 L498.2 292.5 L499.4 286.3 L500.6 286.7 L501.8 285.8 L503.0 286.0 L504.2 281.2 L505.4 277.9 L506.6 279.0 L507.8 278.7 L509.0 276.6 L510.2 274.4 L511.4 275.6 L512.6 272.9 L513.8 272.9 L515.0 269.5 L516.2 263.8 L517.4 266.3 L518.6 260.8 L519.8 265.9 L521.0 265.7 L522.2 262.7 L523.4 261.5 L524.6 260.5 L525.8 260.2 L527.0 261.6 L528.2 258.4 L529.4 260.5 L530.6 258.3 L531.8 258.6 L533.0 258.8 L534.2 258.6 L535.4 260.5 L536.6 257.2 L537.8 256.8 L539.0 259.1 L540.2 251.6 L541.4 256.9 L542.6 260.1 L543.8 260.5 L545.0 258.5 L546.2 261.4 L547.4 254.2 L548.6 255.1 L549.8 249.1 L551.0 250.7 L552.2 244.3 L553.4 239.8 L554.6 238.4 L555.8 241.3 L557.0 234.4 L558.2 232.8 L559.4 226.5 L560.6 225.6 L561.8 219.5 L563.0 220.9 L564.2 221.2 L565.4 218.1 L566.6 210.5 L567.8 214.5 L569.0 211.3 L570.2 206.0 L571.4 210.6 L572.6 212.1 L573.8 207.5 L575.0 208.1 L576.2 211.3 L577.4 206.1 L578.6 206.9 L579.8 205.2 L581.0 207.9 L582.2 203.1 L583.4 206.5 L584.6 201.8 L585.8 207.0 L587.0 203.4 L588.2 203.0 L589.4 206.5 L590.6 207.6 L591.8 204.5 L593.0 204.4 L594.2 203.7 L595.4 202.2 L596.6 196.3 L597.8 200.8 L599.0 197.1 L600.2 199.7 L601.4 197.6 L602.6 198.6 L603.8 199.5 L605.0 198.2 L605.5 309.9 L605.5 309.9 L606.7 309.9 L607.9 309.9 L609.1 309.9 L610.3 309.9 L611.5 309.9 L612.7 309.9 L613.9 309.9 L615.1 309.9 L616.3 309.9 L617.5 309.9 L618.7 309.9 L619.9 309.9 L621.1 309.9 L622.3 309.9 L623.5 309.0 L624.7 308.3 L625.9 304.4 L627.1 304.3 L628.3 299.4 L629.5 299.6 L630.7 296.6 L631.9 297.6 L633.1 294.0 L634.3 290.5 L635.5 290.4 L636.7 286.9 L637.9 285.2 L639.1 286.3 L640.3 278.1 L641.5 282.0 L642.7 272.9 L643.9 272.6 L645.1 271.8 L646.3 271.5 L647.5 271.7 L648.7 264.1 L649.9 261.5 L651.1 266.2 L652.3 258.5 L653.5 258.4 L654.7 257.3 L655.9 256.5 L657.1 256.6 L658.3 254.8 L659.5 253.8 L660.7 250.9 L661.9 256.8 L663.1 253.0 L664.3 255.8 L665.5 252.7 L666.7 253.3 L667.9 254.1 L669.1 250.6 L670.3 250.2 L671.5 254.5 L672.7 253.0 L673.9 249.9 L675.1 251.9 L676.3 249.7 L677.5 256.7 L678.7 250.8 L679.9 250.4 L681.1 248.7 L682.3 243.8 L683.5 249.4 L684.7 248.9 L685.9 244.8 L687.1 248.2 L688.3 243.8 L689.5 245.6 L690.7 251.3 L691.9 246.4 L693.1 240.1 L694.3 240.2 L695.5 236.9 L696.7 234.0 L697.9 230.9 L699.1 225.1 L700.3 223.7 L701.5 221.2 L702.7 213.1 L703.9 218.9 L705.1 213.9 L706.3 209.9 L707.5 206.9 L708.7 208.5 L709.9 197.8 L711.1 204.0 L712.3 202.1 L713.5 203.0 L714.7 205.5 L715.9 196.8 L717.1 202.2 L718.3 201.2 L719.5 201.2 L720.7 200.1 L721.9 197.1 L723.1 200.1 L724.3 207.6 L725.5 200.9 L726.7 201.5 L727.9 197.3 L729.1 199.2 L730.3 196.7 L731.5 197.1 L732.7 198.4 L733.9 195.1 L735.1 197.2 L736.3 199.0 L737.5 199.4 L738.7 197.8 L739.9 201.3 L741.1 194.9 L742.3 193.9 L743.5 226.0 L744.7 298.1 L745.0 309.9 L745.0 309.9 L746.2 309.9 L747.4 309.9 L748.6 309.9 L749.8 309.9 L751.0 309.9 L752.2 309.9 L753.4 309.9 L754.6 309.9 L755.8 309.9 L757.0 309.9 L758.2 309.9 L759.4 309.9 L760.6 309.9 L761.8 309.9 L763.0 308.5 L764.2 304.0 L765.4 305.1 L766.6 301.6 L767.8 302.4 L769.0 302.6 L770.2 299.6 L771.4 298.0 L772.6 293.7 L773.8 294.1 L775.0 288.9 L776.2 289.1 L777.4 283.3 L778.6 292.0 L779.8 283.6 L781.0 287.0 L782.2 284.7 L783.4 282.8 L784.6 279.6 L785.8 280.9 L787.0 279.9 L788.2 272.4 L789.4 275.6 L790.6 269.2 L791.8 269.5 L793.0 263.6 L794.2 264.2 L795.4 263.6 L796.6 261.8 L797.8 259.8 L799.0 256.1 L800.2 254.2 L801.4 257.0 L802.6 256.1 L803.8 260.1 L805.0 256.7 L806.2 253.4 L807.4 253.2 L808.6 258.3 L809.8 256.1 L811.0 256.1 L812.2 253.8 L813.4 255.8 L814.6 253.8 L815.8 250.4 L817.0 252.8 L818.2 253.8 L819.4 252.3 L820.6 255.7 L821.8 252.2 L823.0 251.4 L824.2 247.5 L825.4 253.4 L826.6 248.3 L827.8 249.1 L829.0 245.9 L830.2 246.2 L831.4 248.3 L832.6 248.5 L833.8 241.4 L835.0 238.1 L836.2 240.0 L837.4 232.7 L838.6 233.7 L839.8 229.0 L841.0 231.0 L842.2 224.6 L843.4 223.3 L844.6 220.9 L845.8 219.7 L847.0 216.9 L848.2 212.0 L849.4 213.5 L850.6 216.5 L851.8 214.1 L853.0 207.9 L854.2 210.3 L855.4 210.2 L856.6 205.5 L857.8 213.0 L859.0 210.6 L860.2 205.9 L861.4 204.2 L862.6 205.6 L863.8 208.5 L865.0 202.8 L866.2 204.1 L867.4 206.3 L868.6 209.0 L869.8 203.5 L871.0 204.9 L872.2 205.1 L873.4 204.3 L874.6 203.0 L875.8 203.0 L877.0 201.1 L878.2 197.7 L879.4 205.8 L880.6 202.5 L881.8 199.8 L883.0 199.4 L884.0 309.9 L884.0 309.9 L885.2 309.9 L886.4 309.9 L887.6 309.9 L888.8 309.9 L890.0 309.9 L891.2 309.9 L892.4 309.9 L893.6 309.9 L894.8 309.9 L896.0 309.9 L897.2 309.9 L898.4 309.9 L899.6 309.9 L900.8 309.9 L902.0 309.9 L903.2 307.7 L904.4 306.0 L905.6 305.8 L906.8 302.4 L908.0 298.5 L909.2 297.7 L910.4 294.0 L911.6 293.8 L912.8 289.5 L914.0 287.5 L915.2 288.3 L916.4 290.1 L917.6 280.6 L918.8 281.7 L920.0 288.1 L921.2 272.6 L922.4 273.4 L923.6 268.8 L924.8 266.1 L926.0 259.2 L927.2 264.6 L928.4 261.9 L929.6 259.7 L930.8 257.4 L932.0 260.5 L933.2 258.6 L934.4 256.0 L935.6 260.5 L936.8 255.6 L938.0 253.2 L939.2 256.3 L940.4 254.2 L941.6 258.3 L942.8 254.0 L944.0 259.9 L945.2 256.6 L946.4 252.9 L947.6 257.2 L948.8 253.9 L950.0 257.7 L951.2 254.8 L952.4 254.5 L953.6 255.4 L954.8 256.6 L956.0 255.2 L957.2 256.6 L958.4 256.1 L959.6 256.6 L960.8 254.4 L962.0 250.7 L963.2 247.5 L964.4 251.8 L965.6 251.9 L966.8 254.8 L968.0 254.3 L969.2 250.5 L970.4 249.5 L971.6 254.0 L972.8 251.2 L974.0 244.4 L975.2 241.4 L976.4 239.2 L977.6 239.7 L978.8 236.9 L980.0 232.8 L981.2 235.7 L982.4 226.4 L983.6 222.3 L984.8 221.5 L986.0 218.4 L987.2 219.0 L988.4 213.0 L989.6 210.5 L990.8 210.0 L992.0 205.7 L993.2 206.3 L994.4 202.6 L995.6 199.4 L996.8 200.9 L998.0 201.2 L999.2 201.2 L1000.4 197.2 L1001.6 195.3 L1002.8 194.4 L1004.0 197.1 L1005.2 197.2 L1006.4 196.5 L1007.6 194.0 L1008.8 198.2 L1010.0 195.6 L1011.2 194.8 L1012.4 195.6 L1013.6 191.4 L1014.8 193.5 L1016.0 194.6 L1017.2 189.8 L1018.4 195.6 L1019.6 193.3 L1020.8 192.7 L1022.0 193.7 L1023.0 309.9 L1023.0 309.9 L1024.2 309.9 L1025.4 309.9 L1026.6 309.9 L1027.8 309.9 L1029.0 309.9 L1030.2 309.9 L1031.4 309.9 L1032.6 309.9 L1033.8 309.9 L1035.0 309.9 L1036.2 309.9 L1037.4 309.9 L1038.6 309.9 L1039.8 309.9 L1041.0 309.9 L1042.2 307.5 L1043.4 300.8 L1044.6 301.8 L1045.8 302.1 L1047.0 297.4 L1048.2 294.1 L1049.4 294.8 L1050.6 289.4 L1051.8 284.4 L1053.0 284.6 L1054.2 282.7 L1055.4 282.1 L1056.6 278.8 L1057.8 280.4 L1059.0 273.5 L1060.2 274.0 L1061.4 270.2 L1062.6 266.8 L1063.8 271.9 L1065.0 267.7 L1066.2 269.5 L1067.4 260.2 L1068.6 265.3 L1069.8 265.2 L1071.0 260.4 L1072.2 260.2 L1073.4 256.7 L1074.6 260.0 L1075.8 254.1 L1077.0 252.8 L1078.2 258.5 L1079.4 255.2 L1080.6 256.8 L1081.8 256.5 L1083.0 256.3 L1084.2 255.0 L1085.4 254.7 L1086.6 255.1 L1087.8 247.3 L1089.0 255.9 L1090.2 253.5 L1091.4 253.5 L1092.6 257.8 L1093.8 250.4 L1095.0 250.0 L1096.2 250.9 L1097.4 254.4 L1098.6 250.6 L1099.8 253.9 L1101.0 250.7 L1102.2 250.1 L1103.4 249.2 L1104.6 250.2 L1105.8 247.3 L1107.0 245.0 L1108.2 244.0 L1109.4 243.5 L1110.6 238.2 L1111.8 235.8 L1113.0 232.9 L1114.2 233.3 L1115.4 228.9 L1116.6 230.7 L1117.8 227.3 L1119.0 224.4 L1120.2 218.7 L1121.4 222.1 L1122.6 219.4 L1123.8 218.6 L1125.0 212.8 L1126.2 211.7 L1127.4 212.0 L1128.6 213.3 L1129.8 206.2 L1131.0 209.0 L1132.2 202.3 L1133.4 206.1 L1134.6 198.8 L1135.8 200.2 L1137.0 200.3 L1138.2 195.4 L1139.4 196.2 L1140.6 201.4 L1141.8 192.7 L1143.0 196.3 L1144.2 199.5 L1145.4 195.0 L1146.6 193.6 L1147.8 194.2 L1149.0 195.8 L1150.2 192.3 L1151.4 195.3 L1152.6 196.3 L1153.8 190.9 L1155.0 194.3 L1156.2 194.0 L1157.4 189.1 L1158.6 194.8 L1159.8 188.5 L1161.0 192.2 L1162.2 238.5 L1162.5 309.9 L1162.5 309.9 L1163.7 309.9 L1164.9 309.9 L1166.1 309.9 L1167.3 309.9 L1168.5 309.9 L1169.7 309.9 L1170.9 309.9 L1172.1 309.9 L1173.3 309.9 L1174.5 309.9 L1175.7 309.9 L1176.9 309.9 L1178.1 309.9 L1179.3 309.9 L1180.5 308.8 L1181.7 304.8 L1182.9 306.5 L1184.1 303.5 L1185.3 301.0 L1186.5 294.5 L1187.7 293.1 L1188.9 295.6 L1190.1 288.5 L1191.3 286.6 L1192.5 284.1 L1193.7 280.5 L1194.9 285.8 L1196.1 277.8 L1197.3 281.8 L1198.5 278.4 L1199.7 276.4 L1200.9 274.1 L1202.1 272.8 L1203.3 270.6 L1204.5 267.5 L1205.7 265.2 L1206.9 264.6 L1208.1 264.9 L1209.3 264.9 L1210.5 259.6 L1211.7 258.8 L1212.9 258.4 L1214.1 258.9 L1215.3 257.5 L1216.5 263.6 L1217.7 256.5 L1218.9 257.0 L1220.1 259.5 L1221.3 255.6 L1222.5 258.9 L1223.7 259.3 L1224.9 256.3 L1226.1 253.4 L1227.3 255.6 L1228.5 259.7 L1229.7 257.4 L1230.9 254.0 L1232.1 254.0 L1233.3 256.6 L1234.5 253.9 L1235.7 250.9 L1236.9 255.3 L1238.1 251.3 L1239.3 252.9 L1240.5 254.2 L1241.7 253.5 L1242.9 252.5 L1244.1 249.0 L1245.3 250.9 L1246.5 250.7 L1247.7 253.1 L1248.9 251.2 L1250.1 252.3 L1251.3 251.3 L1252.5 243.2 L1253.7 241.7 L1254.9 242.9 L1256.1 234.9 L1257.3 231.2 L1258.5 232.0 L1259.7 227.4 L1260.9 223.6 L1262.1 217.6 L1263.3 213.9 L1264.5 212.2 L1265.7 208.7 L1266.9 204.9 L1268.1 208.5 L1269.3 208.4 L1270.5 201.6 L1271.7 203.9 L1272.9 203.9 L1274.1 205.8 L1275.3 205.1 L1276.5 206.2 L1277.7 200.2 L1278.9 203.0 L1280.1 200.8 L1281.3 203.2 L1282.5 202.4 L1283.7 197.4 L1284.9 199.4 L1286.1 202.2 L1287.3 202.7 L1288.5 201.6 L1289.7 200.1 L1290.9 203.0 L1292.1 194.7 L1293.3 197.2 L1294.5 197.4 L1295.7 206.3 L1296.9 202.7 L1297.0 192.9 L1301.8 309.9 L1303.0 309.9 L1304.2 309.9 L1305.4 309.9 L1306.6 309.9 L1307.8 309.9 L1309.0 309.9 L1310.2 309.9 L1311.4 309.9 L1312.6 309.9 L1313.8 309.9 L1315.0 309.9 L1316.2 309.9 L1317.4 309.9 L1318.6 309.9 L1319.8 309.0 L1321.0 303.1" fill="none" stroke="#21436b" stroke-width="1" stroke-opacity="0.22" stroke-dasharray="5 7"/>
<path d="M498.0 485.7 L498.2 435.7 L499.4 432.1 L500.6 430.2 L501.8 430.9 L503.0 430.8 L504.2 430.8 L505.4 428.6 L506.6 430.8 L507.8 431.3 L509.0 430.4 L510.2 429.8 L511.4 432.1 L512.6 432.6 L513.8 428.0 L515.0 424.4 L516.2 424.4 L517.4 420.7 L518.6 419.0 L519.8 416.5 L521.0 416.1 L522.2 413.7 L523.4 409.2 L524.6 408.2 L525.8 410.1 L527.0 403.4 L528.2 400.4 L529.4 401.1 L530.6 397.7 L531.8 397.7 L533.0 394.5 L534.2 392.4 L535.4 391.2 L536.6 387.3 L537.8 385.7 L539.0 383.5 L540.2 381.1 L541.4 382.8 L542.6 377.6 L543.8 378.0 L545.0 374.4 L546.2 371.9 L547.4 371.1 L548.6 367.6 L549.8 367.3 L551.0 364.2 L552.2 360.8 L553.4 363.1 L554.6 361.7 L555.8 363.8 L557.0 361.6 L558.2 364.1 L559.4 363.2 L560.6 364.1 L561.8 361.8 L563.0 363.3 L564.2 362.8 L565.4 361.8 L566.6 361.1 L567.8 361.5 L569.0 364.6 L570.2 365.1 L571.4 368.4 L572.6 372.2 L573.8 372.3 L575.0 378.3 L576.2 379.8 L577.4 380.7 L578.6 383.9 L579.8 386.8 L581.0 390.3 L582.2 393.7 L583.4 397.1 L584.6 403.3 L585.8 411.9 L587.0 420.3 L588.2 426.3 L589.4 430.6 L590.6 439.3 L591.8 445.2 L593.0 455.0 L594.2 458.1 L595.4 461.4 L596.6 461.4 L597.8 467.4 L599.0 469.4 L600.2 471.3 L601.4 476.6 L602.6 478.2 L603.8 480.7 L605.0 482.1 L606.2 484.2 L607.0 485.7 L623.0 485.7 L624.2 482.1 L625.4 477.1 L626.6 473.0 L627.8 469.3 L629.0 465.9 L630.2 460.1 L631.4 455.8 L632.6 448.6 L633.8 445.2 L635.0 441.0 L636.2 438.8 L637.4 432.2 L638.6 428.3 L639.8 424.9 L641.0 422.7 L642.2 424.0 L643.4 423.9 L644.6 424.5 L645.8 425.5 L647.0 423.0 L648.2 426.1 L649.4 424.1 L650.6 426.1 L651.8 424.4 L653.0 425.8 L654.2 421.4 L655.4 421.1 L656.6 418.9 L657.8 417.3 L659.0 415.1 L660.2 413.1 L661.4 408.6 L662.6 407.9 L663.8 407.2 L665.0 402.4 L666.2 401.6 L667.4 398.8 L668.6 396.5 L669.8 397.1 L671.0 394.4 L672.2 391.4 L673.4 387.4 L674.6 386.2 L675.8 387.4 L677.0 385.3 L678.2 379.5 L679.4 379.0 L680.6 375.9 L681.8 373.6 L683.0 375.3 L684.2 369.9 L685.4 369.0 L686.6 366.9 L687.8 362.2 L689.0 362.6 L690.2 361.3 L691.4 360.3 L692.6 355.3 L693.8 356.6 L695.0 358.9 L696.2 357.2 L697.4 357.0 L698.6 359.8 L699.8 356.9 L701.0 358.4 L702.2 356.1 L703.4 358.3 L704.6 357.6 L705.8 360.4 L707.0 358.8 L708.2 358.9 L709.4 355.3 L710.6 359.2 L711.8 361.3 L713.0 365.1 L714.2 367.5 L715.4 369.0 L716.6 368.8 L717.8 375.2 L719.0 374.9 L720.2 377.6 L721.4 381.8 L722.6 383.8 L723.8 385.9 L725.0 390.9 L726.2 392.8 L727.4 398.1 L728.6 406.7 L729.8 414.7 L731.0 421.9 L732.2 432.8 L733.4 442.2 L734.6 454.8 L735.8 455.0 L737.0 459.7 L738.2 460.3 L739.4 462.7 L740.6 464.0 L741.8 468.5 L743.0 469.9 L744.2 474.8 L745.4 479.8 L746.6 484.2 L747.0 485.7 L762.0 485.7 L763.2 480.7 L764.4 476.1 L765.6 477.2 L766.8 469.3 L768.0 465.4 L769.2 457.7 L770.4 461.9 L771.6 452.9 L772.8 448.7 L774.0 445.4 L775.2 439.3 L776.4 436.6 L777.6 432.8 L778.8 431.4 L780.0 424.2 L781.2 424.0 L782.4 422.7 L783.6 424.4 L784.8 422.4 L786.0 422.1 L787.2 425.5 L788.4 423.1 L789.6 426.1 L790.8 426.5 L792.0 423.6 L793.2 423.5 L794.4 422.4 L795.6 421.3 L796.8 419.7 L798.0 415.7 L799.2 414.6 L800.4 410.6 L801.6 408.4 L802.8 409.1 L804.0 405.9 L805.2 404.4 L806.4 401.4 L807.6 399.8 L808.8 398.6 L810.0 396.5 L811.2 394.1 L812.4 391.3 L813.6 391.6 L814.8 387.4 L816.0 383.4 L817.2 382.1 L818.4 381.4 L819.6 380.6 L820.8 373.9 L822.0 373.2 L823.2 370.7 L824.4 370.0 L825.6 368.0 L826.8 367.3 L828.0 365.6 L829.2 363.9 L830.4 363.3 L831.6 363.8 L832.8 364.9 L834.0 365.1 L835.2 363.6 L836.4 363.2 L837.6 364.3 L838.8 365.3 L840.0 362.7 L841.2 363.4 L842.4 366.0 L843.6 365.0 L844.8 362.2 L846.0 364.0 L847.2 365.6 L848.4 364.6 L849.6 366.7 L850.8 368.9 L852.0 372.5 L853.2 375.0 L854.4 377.0 L855.6 378.8 L856.8 381.6 L858.0 382.6 L859.2 389.5 L860.4 390.2 L861.6 391.4 L862.8 393.5 L864.0 399.2 L865.2 408.8 L866.4 417.7 L867.6 428.0 L868.8 433.7 L870.0 442.0 L871.2 448.5 L872.4 456.8 L873.6 460.4 L874.8 465.0 L876.0 468.6 L877.2 470.9 L878.4 474.7 L879.6 477.6 L880.8 479.5 L882.0 480.6 L883.2 482.7 L884.4 484.7 L885.0 485.7 L902.0 485.7 L903.2 479.9 L904.4 477.8 L905.6 473.4 L906.8 467.1 L908.0 467.3 L909.2 459.9 L910.4 456.3 L911.6 448.5 L912.8 444.9 L914.0 441.1 L915.2 437.0 L916.4 432.7 L917.6 427.7 L918.8 427.1 L920.0 427.0 L921.2 428.5 L922.4 429.5 L923.6 429.6 L924.8 427.3 L926.0 427.5 L927.2 426.8 L928.4 429.7 L929.6 426.5 L930.8 428.4 L932.0 429.5 L933.2 424.6 L934.4 424.1 L935.6 423.1 L936.8 418.9 L938.0 416.9 L939.2 416.1 L940.4 413.0 L941.6 410.0 L942.8 409.8 L944.0 406.1 L945.2 405.8 L946.4 404.7 L947.6 401.2 L948.8 398.3 L950.0 396.7 L951.2 395.3 L952.4 391.8 L953.6 392.5 L954.8 389.4 L956.0 386.7 L957.2 384.7 L958.4 382.5 L959.6 380.4 L960.8 375.4 L962.0 378.5 L963.2 374.5 L964.4 369.7 L965.6 371.6 L966.8 371.4 L968.0 370.3 L969.2 371.5 L970.4 370.5 L971.6 372.1 L972.8 371.3 L974.0 370.4 L975.2 370.5 L976.4 371.0 L977.6 371.9 L978.8 371.1 L980.0 374.5 L981.2 372.1 L982.4 371.8 L983.6 372.5 L984.8 372.8 L986.0 376.8 L987.2 378.5 L988.4 377.6 L989.6 381.7 L990.8 385.0 L992.0 387.3 L993.2 389.7 L994.4 391.6 L995.6 392.7 L996.8 393.7 L998.0 398.4 L999.2 405.3 L1000.4 411.2 L1001.6 422.0 L1002.8 428.6 L1004.0 434.9 L1005.2 444.6 L1006.4 453.9 L1007.6 456.3 L1008.8 461.1 L1010.0 462.3 L1011.2 468.2 L1012.4 470.7 L1013.6 475.0 L1014.8 476.2 L1016.0 481.6 L1017.2 483.7 L1018.0 485.7 L1040.0 485.7 L1041.2 479.8 L1042.4 478.0 L1043.6 471.5 L1044.8 470.4 L1046.0 463.3 L1047.2 458.5 L1048.4 454.2 L1049.6 452.6 L1050.8 447.5 L1052.0 446.6 L1053.2 437.8 L1054.4 437.6 L1055.6 430.4 L1056.8 426.8 L1058.0 423.2 L1059.2 417.7 L1060.4 417.0 L1061.6 413.7 L1062.8 412.9 L1064.0 414.7 L1065.2 415.3 L1066.4 416.4 L1067.6 415.1 L1068.8 415.3 L1070.0 417.0 L1071.2 412.4 L1072.4 411.7 L1073.6 408.9 L1074.8 407.6 L1076.0 402.7 L1077.2 402.9 L1078.4 400.5 L1079.6 398.5 L1080.8 392.8 L1082.0 392.3 L1083.2 390.1 L1084.4 387.2 L1085.6 386.5 L1086.8 381.6 L1088.0 380.6 L1089.2 381.3 L1090.4 376.3 L1091.6 374.2 L1092.8 373.0 L1094.0 367.4 L1095.2 366.9 L1096.4 363.0 L1097.6 360.0 L1098.8 358.4 L1100.0 357.1 L1101.2 354.5 L1102.4 352.8 L1103.6 351.3 L1104.8 352.6 L1106.0 350.6 L1107.2 353.3 L1108.4 352.3 L1109.6 350.7 L1110.8 351.1 L1112.0 351.9 L1113.2 350.6 L1114.4 351.1 L1115.6 353.7 L1116.8 350.1 L1118.0 352.1 L1119.2 349.8 L1120.4 352.5 L1121.6 352.1 L1122.8 355.0 L1124.0 354.9 L1125.2 357.4 L1126.4 362.4 L1127.6 362.6 L1128.8 366.4 L1130.0 365.8 L1131.2 368.5 L1132.4 370.2 L1133.6 371.9 L1134.8 373.6 L1136.0 376.5 L1137.2 379.8 L1138.4 389.7 L1139.6 398.1 L1140.8 405.1 L1142.0 412.8 L1143.2 422.4 L1144.4 429.1 L1145.6 436.6 L1146.8 446.0 L1148.0 454.0 L1149.2 457.0 L1150.4 460.0 L1151.6 464.2 L1152.8 467.9 L1154.0 471.0 L1155.2 474.8 L1156.4 477.8 L1157.6 477.9 L1158.8 480.4 L1160.0 481.5 L1161.2 484.3 L1162.0 485.7 L1180.0 485.7 L1181.2 478.0 L1182.4 477.2 L1183.6 469.9 L1184.8 468.7 L1186.0 462.1 L1187.2 458.7 L1188.4 453.3 L1189.6 450.0 L1190.8 445.1 L1192.0 438.7 L1193.2 433.5 L1194.4 429.1 L1195.6 427.7 L1196.8 426.5 L1198.0 427.0 L1199.2 429.0 L1200.4 426.2 L1201.6 428.3 L1202.8 427.6 L1204.0 427.3 L1205.2 427.5 L1206.4 427.0 L1207.6 428.0 L1208.8 427.4 L1210.0 422.8 L1211.2 422.7 L1212.4 418.2 L1213.6 416.4 L1214.8 414.2 L1216.0 413.8 L1217.2 414.7 L1218.4 409.5 L1219.6 407.1 L1220.8 406.1 L1222.0 401.9 L1223.2 400.4 L1224.4 400.0 L1225.6 394.8 L1226.8 396.3 L1228.0 390.7 L1229.2 392.8 L1230.4 388.8 L1231.6 388.0 L1232.8 384.4 L1234.0 384.3 L1235.2 380.9 L1236.4 378.7 L1237.6 376.3 L1238.8 372.0 L1240.0 374.1 L1241.2 370.9 L1242.4 369.1 L1243.6 364.1 L1244.8 366.7 L1246.0 367.9 L1247.2 367.5 L1248.4 365.7 L1249.6 367.0 L1250.8 367.2 L1252.0 365.8 L1253.2 367.8 L1254.4 365.3 L1255.6 365.7 L1256.8 364.9 L1258.0 365.0 L1259.2 365.2 L1260.4 367.2 L1261.6 368.8 L1262.8 370.6 L1264.0 372.8 L1265.2 376.2 L1266.4 376.1 L1267.6 377.9 L1268.8 383.0 L1270.0 383.0 L1271.2 383.6 L1272.4 385.6 L1273.6 389.8 L1274.8 390.0 L1276.0 393.9 L1277.2 396.1 L1278.4 401.2 L1279.6 410.3 L1280.8 420.0 L1282.0 424.1 L1283.2 432.0 L1284.4 441.0 L1285.6 446.2 L1286.8 454.5 L1288.0 458.2 L1289.2 466.2 L1290.4 468.3 L1291.6 470.4 L1292.8 474.1 L1294.0 479.1 L1295.2 478.2 L1296.4 484.1 L1297.0 485.7 L1319.2 485.7 L1320.5 481.4 L1321.7 477.4" fill="none" stroke="#ff4f00" stroke-width="1" stroke-opacity="0.22" stroke-dasharray="5 7"/>
<path d="M498.0 525.3 H605.5 V661.3 H623.0 V525.3 H745.0 V661.3 H762.0 V525.3 H884.0 V661.3 H902.0 V525.3 H1023.0 V661.3 H1041.0 V525.3 H1162.5 V661.3 H1180.0 V525.3 H1301.0 V661.3 H1319.2 V525.3 H1322.0" fill="none" stroke="#2f8007" stroke-width="1.1" stroke-opacity="0.2" stroke-dasharray="6 6"/>
<path d="M498.0 309.9 L498.4 253.1 L499.6 251.9 L500.8 253.8 L502.0 253.0 L503.2 254.1 L504.4 252.8 L505.6 252.6 L506.8 252.8 L508.0 252.9 L509.2 251.2 L510.4 251.1 L511.6 250.9 L512.8 242.4 L514.0 239.5 L515.2 232.5 L516.4 225.9 L517.6 219.7 L518.8 214.9 L520.0 208.6 L521.2 201.9 L522.4 196.7 L523.6 190.7 L524.8 183.4 L526.0 177.1 L527.2 173.7 L528.4 176.9 L529.6 180.2 L530.8 183.9 L532.0 187.2 L533.2 191.0 L534.4 193.0 L535.6 198.5 L536.8 203.3 L538.0 207.6 L539.2 212.0 L540.4 215.8 L541.6 222.3 L542.8 227.2 L544.0 231.3 L545.2 237.1 L546.4 239.7 L547.6 244.8 L548.8 249.7 L550.0 255.3 L551.2 259.2 L552.4 263.6 L553.6 267.5 L554.8 270.2 L556.0 273.6 L557.2 272.7 L558.4 276.0 L559.6 278.5 L560.8 278.6 L562.0 281.1 L563.2 284.8 L564.4 285.4 L565.6 287.5 L566.8 288.0 L568.0 293.0 L568.5 309.9 L586.0 309.9 L587.2 304.6 L588.4 303.4 L589.6 301.5 L590.8 296.1 L592.0 290.5 L593.2 286.1 L594.4 281.3 L595.6 278.9 L596.8 276.4 L598.0 270.8 L599.2 267.9 L600.4 264.3 L601.6 260.2 L602.8 255.1 L604.0 253.5 L605.2 250.5 L606.4 249.5 L607.6 249.6 L608.8 250.4 L610.0 250.5 L611.2 249.2 L612.4 248.2 L613.6 248.9 L614.8 249.0 L616.0 248.4 L617.2 251.9 L618.4 251.4 L619.6 250.6 L620.8 251.1 L622.0 250.9 L623.2 249.9 L624.4 251.3 L625.6 250.5 L626.8 252.2 L628.0 251.1 L629.2 248.7 L630.4 250.7 L631.6 249.8 L632.8 249.5 L634.0 250.8 L635.2 249.7 L636.4 250.1 L637.6 249.6 L638.8 251.0 L640.0 251.9 L641.2 251.5 L642.4 251.1 L643.6 249.9 L644.8 250.8 L646.0 251.0 L647.2 250.8 L648.4 249.5 L649.6 251.3 L650.8 249.1 L652.0 247.2 L653.2 240.7 L654.4 233.4 L655.6 228.0 L656.8 223.7 L658.0 217.1 L659.2 211.9 L660.4 204.5 L661.6 199.0 L662.8 194.6 L664.0 187.6 L665.2 182.6 L666.4 180.0 L667.6 184.4 L668.8 189.6 L670.0 193.1 L671.2 197.6 L672.4 202.1 L673.6 206.0 L674.8 212.0 L676.0 217.8 L677.2 221.3 L678.4 225.1 L679.6 229.8 L680.8 233.7 L682.0 238.0 L683.2 243.1 L684.4 247.3 L685.6 252.3 L686.8 254.3 L688.0 259.8 L689.2 264.8 L690.4 269.0 L691.6 272.3 L692.8 274.4 L694.0 279.3 L695.2 285.8 L696.4 286.9 L697.6 289.2 L698.8 291.5 L700.0 294.5 L701.2 298.3 L702.4 299.6 L703.6 302.8 L704.8 306.6 L706.0 307.1 L707.2 308.5 L708.0 309.9 L725.0 309.9 L726.2 307.0 L727.4 301.6 L728.6 297.7 L729.8 295.2 L731.0 291.8 L732.2 285.7 L733.4 281.4 L734.6 278.1 L735.8 276.3 L737.0 269.5 L738.2 266.0 L739.4 262.3 L740.6 257.6 L741.8 254.4 L743.0 251.9 L744.2 252.5 L745.4 253.0 L746.6 252.1 L747.8 252.4 L749.0 253.9 L750.2 252.4 L751.4 252.7 L752.6 254.0 L753.8 252.8 L755.0 251.6 L756.2 252.6 L757.4 250.4 L758.6 250.1 L759.8 252.1 L761.0 251.2 L762.2 249.6 L763.4 252.0 L764.6 252.6 L765.8 252.0 L767.0 253.0 L768.2 252.9 L769.4 251.2 L770.6 251.8 L771.8 251.1 L773.0 250.8 L774.2 252.0 L775.4 251.4 L776.6 251.4 L777.8 251.8 L779.0 251.9 L780.2 250.6 L781.4 251.1 L782.6 250.5 L783.8 249.8 L785.0 249.7 L786.2 250.9 L787.4 244.7 L788.6 238.1 L789.8 231.7 L791.0 224.9 L792.2 220.9 L793.4 214.4 L794.6 207.7 L795.8 200.7 L797.0 194.6 L798.2 191.1 L799.4 184.3 L800.6 179.0 L801.8 173.1 L803.0 178.4 L804.2 184.1 L805.4 189.2 L806.6 193.2 L807.8 197.3 L809.0 204.1 L810.2 208.6 L811.4 213.5 L812.6 219.0 L813.8 224.0 L815.0 230.8 L816.2 235.8 L817.4 242.7 L818.6 245.9 L819.8 250.2 L821.0 258.8 L822.2 262.7 L823.4 266.5 L824.6 273.0 L825.8 280.2 L827.0 282.4 L828.2 286.8 L829.4 285.6 L830.6 289.4 L831.8 291.2 L833.0 292.2 L834.2 294.0 L835.4 295.0 L836.6 296.8 L837.8 299.2 L839.0 299.2 L840.2 301.2 L841.4 303.1 L842.6 304.6 L843.8 306.3 L845.0 307.6 L846.2 309.0 L847.0 309.9 L865.0 309.9 L866.2 304.9 L867.4 302.3 L868.6 297.6 L869.8 293.2 L871.0 291.3 L872.2 286.5 L873.4 280.5 L874.6 279.3 L875.8 273.2 L877.0 271.6 L878.2 266.1 L879.4 263.7 L880.6 259.3 L881.8 257.7 L883.0 257.8 L884.2 256.1 L885.4 256.2 L886.6 256.1 L887.8 256.8 L889.0 255.2 L890.2 255.8 L891.4 256.5 L892.6 257.8 L893.8 256.0 L895.0 255.9 L896.2 256.5 L897.4 255.8 L898.6 255.6 L899.8 256.7 L901.0 255.7 L902.2 255.9 L903.4 255.9 L904.6 256.5 L905.8 256.6 L907.0 255.9 L908.2 254.5 L909.4 253.5 L910.6 256.2 L911.8 256.9 L913.0 256.1 L914.2 256.6 L915.4 256.1 L916.6 255.1 L917.8 256.5 L919.0 254.8 L920.2 254.6 L921.4 253.7 L922.6 253.4 L923.8 254.2 L925.0 252.8 L926.2 255.6 L927.4 254.7 L928.6 254.8 L929.8 254.5 L931.0 253.8 L932.2 255.1 L933.4 252.9 L934.6 253.3 L935.8 249.9 L937.0 243.2 L938.2 238.2 L939.4 233.2 L940.6 224.2 L941.8 217.2 L943.0 210.7 L944.2 205.6 L945.4 198.3 L946.6 189.5 L947.8 184.0 L949.0 187.4 L950.2 193.6 L951.4 197.8 L952.6 202.5 L953.8 208.3 L955.0 214.8 L956.2 219.3 L957.4 225.8 L958.6 230.4 L959.8 234.8 L961.0 241.1 L962.2 246.0 L963.4 249.4 L964.6 256.2 L965.8 260.4 L967.0 266.7 L968.2 272.7 L969.4 276.7 L970.6 282.2 L971.8 287.5 L973.0 289.4 L974.2 291.2 L975.4 292.0 L976.6 296.8 L977.8 298.9 L979.0 300.2 L980.2 302.4 L981.4 304.8 L982.6 304.5 L983.8 308.1 L985.0 309.9 L1004.0 309.9 L1005.2 305.7 L1006.4 301.6 L1007.6 298.8 L1008.8 294.4 L1010.0 289.6 L1011.2 286.2 L1012.4 282.5 L1013.6 279.6 L1014.8 276.1 L1016.0 272.4 L1017.2 270.9 L1018.4 263.7 L1019.6 262.2 L1020.8 260.9 L1022.0 261.1 L1023.2 260.7 L1024.4 263.4 L1025.6 260.9 L1026.8 262.4 L1028.0 262.1 L1029.2 263.0 L1030.4 262.8 L1031.6 260.4 L1032.8 261.5 L1034.0 261.1 L1035.2 261.2 L1036.4 262.2 L1037.6 261.7 L1038.8 262.2 L1040.0 261.2 L1041.2 263.2 L1042.4 261.3 L1043.6 259.9 L1044.8 259.6 L1046.0 259.6 L1047.2 260.3 L1048.4 261.8 L1049.6 259.8 L1050.8 260.2 L1052.0 260.4 L1053.2 262.0 L1054.4 260.3 L1055.6 259.2 L1056.8 259.8 L1058.0 260.8 L1059.2 260.0 L1060.4 260.6 L1061.6 260.4 L1062.8 259.6 L1064.0 260.1 L1065.2 260.4 L1066.4 260.1 L1067.6 258.6 L1068.8 253.4 L1070.0 246.5 L1071.2 242.3 L1072.4 235.7 L1073.6 232.9 L1074.8 224.3 L1076.0 220.3 L1077.2 213.1 L1078.4 212.1 L1079.6 205.9 L1080.8 197.3 L1082.0 193.2 L1083.2 189.6 L1084.4 195.5 L1085.6 201.2 L1086.8 206.5 L1088.0 213.9 L1089.2 218.7 L1090.4 222.9 L1091.6 229.8 L1092.8 236.4 L1094.0 241.4 L1095.2 245.5 L1096.4 251.8 L1097.6 256.8 L1098.8 261.2 L1100.0 265.9 L1101.2 270.3 L1102.4 277.0 L1103.6 281.5 L1104.8 284.6 L1106.0 290.8 L1107.2 291.9 L1108.4 294.7 L1109.6 298.4 L1110.8 301.7 L1112.0 302.3 L1113.2 303.7 L1114.4 307.2 L1115.6 309.2 L1116.0 309.9 L1143.0 309.9 L1144.2 304.5 L1145.4 301.8 L1146.6 298.9 L1147.8 295.1 L1149.0 290.1 L1150.2 286.0 L1151.4 281.4 L1152.6 278.8 L1153.8 273.7 L1155.0 269.0 L1156.2 267.3 L1157.4 259.1 L1158.6 256.8 L1159.8 252.9 L1161.0 250.7 L1162.2 250.4 L1163.4 248.3 L1164.6 248.4 L1165.8 251.9 L1167.0 248.1 L1168.2 248.5 L1169.4 248.6 L1170.6 250.4 L1171.8 249.0 L1173.0 249.9 L1174.2 248.6 L1175.4 247.3 L1176.6 248.5 L1177.8 248.1 L1179.0 249.5 L1180.2 250.2 L1181.4 249.1 L1182.6 248.0 L1183.8 247.5 L1185.0 249.1 L1186.2 248.8 L1187.4 249.5 L1188.6 250.8 L1189.8 248.9 L1191.0 248.6 L1192.2 249.4 L1193.4 249.1 L1194.6 250.8 L1195.8 248.9 L1197.0 247.5 L1198.2 248.9 L1199.4 248.3 L1200.6 248.4 L1201.8 249.7 L1203.0 248.6 L1204.2 248.7 L1205.4 238.7 L1206.6 235.5 L1207.8 230.8 L1209.0 225.2 L1210.2 216.0 L1211.4 210.8 L1212.6 205.0 L1213.8 200.8 L1215.0 193.9 L1216.2 188.5 L1217.4 180.0 L1218.6 175.7 L1219.8 174.9 L1221.0 182.1 L1222.2 188.7 L1223.4 192.7 L1224.6 202.1 L1225.8 206.5 L1227.0 211.8 L1228.2 216.0 L1229.4 221.7 L1230.6 227.6 L1231.8 234.3 L1233.0 237.4 L1234.2 242.5 L1235.4 244.5 L1236.6 250.8 L1237.8 254.2 L1239.0 257.3 L1240.2 263.8 L1241.4 266.6 L1242.6 269.5 L1243.8 270.7 L1245.0 272.5 L1246.2 274.3 L1247.4 276.0 L1248.6 278.2 L1249.8 277.6 L1251.0 282.0 L1252.2 282.8 L1253.4 285.1 L1254.6 289.2 L1255.8 288.3 L1257.0 291.5 L1258.2 295.6 L1259.4 297.3 L1260.0 299.5" fill="none" stroke="#c4005a" stroke-width="1" stroke-opacity="0.22" stroke-dasharray="5 7"/>
<path d="M498.0 309.9 L498.4 260.3 L499.6 258.5 L500.8 260.8 L502.0 258.0 L503.2 259.4 L504.4 257.4 L505.6 258.6 L506.8 258.7 L508.0 256.2 L509.2 257.0 L510.4 255.1 L511.6 253.6 L512.8 248.5 L514.0 249.4 L515.2 243.1 L516.4 239.2 L517.6 240.4 L518.8 233.0 L520.0 229.7 L521.2 230.8 L522.4 232.5 L523.6 230.4 L524.8 224.4 L526.0 217.2 L527.2 217.4 L528.4 214.3 L529.6 214.1 L530.8 214.0 L532.0 210.8 L533.2 213.8 L534.4 211.1 L535.6 208.9 L536.8 209.5 L538.0 207.8 L539.2 209.6 L540.4 206.6 L541.6 206.5 L542.8 210.9 L544.0 208.9 L545.2 207.6 L546.4 203.8 L547.6 204.2 L548.8 203.8 L550.0 203.8 L551.2 202.4 L552.4 201.3 L553.6 204.5 L554.8 206.7 L556.0 201.0 L557.2 202.8 L558.4 201.8 L559.6 202.1 L560.8 204.0 L562.0 204.6 L563.2 198.4 L564.4 197.8 L565.6 197.9 L566.8 199.3 L568.0 198.8 L568.5 309.9 L568.5 309.9 L569.7 309.9 L570.9 309.9 L572.1 309.9 L573.3 309.9 L574.5 309.9 L575.7 309.9 L576.9 309.9 L578.1 309.9 L579.3 309.9 L580.5 309.9 L581.7 309.9 L582.9 309.9 L584.1 309.9 L585.3 309.9 L586.5 309.0 L587.7 303.2 L588.9 305.5 L590.1 302.0 L591.3 299.7 L592.5 300.4 L593.7 297.0 L594.9 293.0 L596.1 293.2 L597.3 294.3 L598.5 291.1 L599.7 285.6 L600.9 285.1 L602.1 283.1 L603.3 277.3 L604.5 278.4 L605.7 278.4 L606.9 275.0 L608.1 267.8 L609.3 273.9 L610.5 265.3 L611.7 264.4 L612.9 266.5 L614.1 265.2 L615.3 259.4 L616.5 260.5 L617.7 260.6 L618.9 253.3 L620.1 255.5 L621.3 253.8 L622.5 254.2 L623.7 254.8 L624.9 253.5 L626.1 254.4 L627.3 252.0 L628.5 250.4 L629.7 250.1 L630.9 249.6 L632.1 248.6 L633.3 250.0 L634.5 253.0 L635.7 249.0 L636.9 254.9 L638.1 252.4 L639.3 249.7 L640.5 254.1 L641.7 246.4 L642.9 252.0 L644.1 252.9 L645.3 250.8 L646.5 250.6 L647.7 248.5 L648.9 248.6 L650.1 245.5 L651.3 248.0 L652.5 246.9 L653.7 249.4 L654.9 245.6 L656.1 245.7 L657.3 245.3 L658.5 234.5 L659.7 236.9 L660.9 233.8 L662.1 230.2 L663.3 223.4 L664.5 225.4 L665.7 219.6 L666.9 214.1 L668.1 207.8 L669.3 209.9 L670.5 205.9 L671.7 206.5 L672.9 199.4 L674.1 204.1 L675.3 203.5 L676.5 202.7 L677.7 204.8 L678.9 202.3 L680.1 204.9 L681.3 198.0 L682.5 201.5 L683.7 201.2 L684.9 197.6 L686.1 202.9 L687.3 196.3 L688.5 195.7 L689.7 200.8 L690.9 197.0 L692.1 198.5 L693.3 195.8 L694.5 197.4 L695.7 199.3 L696.9 195.4 L698.1 197.0 L699.3 195.7 L700.5 193.5 L701.7 192.6 L702.9 193.6 L704.1 198.1 L705.3 192.7 L706.5 223.8 L707.7 290.0 L708.0 309.9 L708.0 309.9 L709.2 309.9 L710.4 309.9 L711.6 309.9 L712.8 309.9 L714.0 309.9 L715.2 309.9 L716.4 309.9 L717.6 309.9 L718.8 309.9 L720.0 309.9 L721.2 309.9 L722.4 309.9 L723.6 309.9 L724.8 309.9 L726.0 308.5 L727.2 307.9 L728.4 306.5 L729.6 301.9 L730.8 303.0 L732.0 303.3 L733.2 297.7 L734.4 294.0 L735.6 295.5 L736.8 291.1 L738.0 290.4 L739.2 292.7 L740.4 288.4 L741.6 288.3 L742.8 285.3 L744.0 292.3 L745.2 282.6 L746.4 281.7 L747.6 284.5 L748.8 278.6 L750.0 279.3 L751.2 276.0 L752.4 271.9 L753.6 268.3 L754.8 268.6 L756.0 264.9 L757.2 263.1 L758.4 263.4 L759.6 255.3 L760.8 256.3 L762.0 257.5 L763.2 255.0 L764.4 255.9 L765.6 258.2 L766.8 254.2 L768.0 256.1 L769.2 254.5 L770.4 253.4 L771.6 253.1 L772.8 250.6 L774.0 254.3 L775.2 254.8 L776.4 255.8 L777.6 255.3 L778.8 251.9 L780.0 252.2 L781.2 254.9 L782.4 254.0 L783.6 253.3 L784.8 248.3 L786.0 253.8 L787.2 250.5 L788.4 254.9 L789.6 251.2 L790.8 247.1 L792.0 253.0 L793.2 247.1 L794.4 253.9 L795.6 247.8 L796.8 247.8 L798.0 242.5 L799.2 240.2 L800.4 235.0 L801.6 233.5 L802.8 231.0 L804.0 230.0 L805.2 225.1 L806.4 225.4 L807.6 222.4 L808.8 219.8 L810.0 214.4 L811.2 208.1 L812.4 213.0 L813.6 207.7 L814.8 214.1 L816.0 212.5 L817.2 209.2 L818.4 208.4 L819.6 207.5 L820.8 204.9 L822.0 208.6 L823.2 204.9 L824.4 206.3 L825.6 213.0 L826.8 208.0 L828.0 206.3 L829.2 204.3 L830.4 202.9 L831.6 204.4 L832.8 200.3 L834.0 205.3 L835.2 202.7 L836.4 200.1 L837.6 204.6 L838.8 198.6 L840.0 198.9 L841.2 201.2 L842.4 200.4 L843.6 200.3 L844.8 199.6 L846.0 196.4 L847.0 309.9 L847.0 309.9 L848.2 309.9 L849.4 309.9 L850.6 309.9 L851.8 309.9 L853.0 309.9 L854.2 309.9 L855.4 309.9 L856.6 309.9 L857.8 309.9 L859.0 309.9 L860.2 309.9 L861.4 309.9 L862.6 309.9 L863.8 309.9 L865.0 309.9 L866.2 307.7 L867.4 306.9 L868.6 304.3 L869.8 299.2 L871.0 299.0 L872.2 295.8 L873.4 293.6 L874.6 291.7 L875.8 290.1 L877.0 286.6 L878.2 283.8 L879.4 280.3 L880.6 280.2 L881.8 280.5 L883.0 278.5 L884.2 273.2 L885.4 276.1 L886.6 271.5 L887.8 265.7 L889.0 267.5 L890.2 267.0 L891.4 261.3 L892.6 269.2 L893.8 261.8 L895.0 261.5 L896.2 260.3 L897.4 255.7 L898.6 253.6 L899.8 254.3 L901.0 255.3 L902.2 255.9 L903.4 257.0 L904.6 256.3 L905.8 259.9 L907.0 257.2 L908.2 254.4 L909.4 255.9 L910.6 253.5 L911.8 258.9 L913.0 256.4 L914.2 257.3 L915.4 252.3 L916.6 255.2 L917.8 255.1 L919.0 257.1 L920.2 255.3 L921.4 256.3 L922.6 255.1 L923.8 248.4 L925.0 256.1 L926.2 253.8 L927.4 255.2 L928.6 249.8 L929.8 255.0 L931.0 254.6 L932.2 251.5 L933.4 248.3 L934.6 251.5 L935.8 251.4 L937.0 253.2 L938.2 252.9 L939.4 241.7 L940.6 238.5 L941.8 232.9 L943.0 231.8 L944.2 230.6 L945.4 224.1 L946.6 220.3 L947.8 223.3 L949.0 216.9 L950.2 213.7 L951.4 215.7 L952.6 209.9 L953.8 208.7 L955.0 203.2 L956.2 200.7 L957.4 205.7 L958.6 199.8 L959.8 195.7 L961.0 197.4 L962.2 200.7 L963.4 199.1 L964.6 200.2 L965.8 196.6 L967.0 200.1 L968.2 193.8 L969.4 194.4 L970.6 192.1 L971.8 193.2 L973.0 193.0 L974.2 192.9 L975.4 193.3 L976.6 198.8 L977.8 192.5 L979.0 195.3 L980.2 198.7 L981.4 188.9 L982.6 192.3 L983.8 195.7 L985.0 190.7 L986.0 309.9 L986.0 309.9 L987.2 309.9 L988.4 309.9 L989.6 309.9 L990.8 309.9 L992.0 309.9 L993.2 309.9 L994.4 309.9 L995.6 309.9 L996.8 309.9 L998.0 309.9 L999.2 309.9 L1000.4 309.9 L1001.6 309.9 L1002.8 309.9 L1004.0 309.9 L1005.2 307.5 L1006.4 303.2 L1007.6 300.8 L1008.8 300.1 L1010.0 296.3 L1011.2 294.8 L1012.4 288.3 L1013.6 285.3 L1014.8 289.3 L1016.0 285.0 L1017.2 281.6 L1018.4 281.1 L1019.6 276.0 L1020.8 272.5 L1022.0 281.6 L1023.2 276.4 L1024.4 270.1 L1025.6 270.2 L1026.8 271.3 L1028.0 268.3 L1029.2 266.2 L1030.4 261.4 L1031.6 266.3 L1032.8 262.4 L1034.0 258.1 L1035.2 257.9 L1036.4 259.5 L1037.6 258.7 L1038.8 261.0 L1040.0 259.6 L1041.2 256.6 L1042.4 252.3 L1043.6 252.1 L1044.8 250.8 L1046.0 251.4 L1047.2 251.6 L1048.4 252.7 L1049.6 254.8 L1050.8 249.8 L1052.0 253.3 L1053.2 256.5 L1054.4 250.9 L1055.6 251.5 L1056.8 245.8 L1058.0 251.9 L1059.2 250.2 L1060.4 253.6 L1061.6 249.0 L1062.8 249.7 L1064.0 252.1 L1065.2 249.3 L1066.4 252.7 L1067.6 248.1 L1068.8 249.1 L1070.0 245.0 L1071.2 245.9 L1072.4 243.5 L1073.6 240.0 L1074.8 235.5 L1076.0 235.1 L1077.2 238.9 L1078.4 229.6 L1079.6 229.3 L1080.8 225.4 L1082.0 222.1 L1083.2 220.8 L1084.4 222.7 L1085.6 219.9 L1086.8 216.0 L1088.0 213.0 L1089.2 215.3 L1090.4 213.2 L1091.6 212.1 L1092.8 207.0 L1094.0 207.8 L1095.2 198.7 L1096.4 200.4 L1097.6 197.7 L1098.8 197.2 L1100.0 198.2 L1101.2 202.6 L1102.4 192.8 L1103.6 195.3 L1104.8 200.3 L1106.0 188.8 L1107.2 193.6 L1108.4 191.3 L1109.6 195.4 L1110.8 198.8 L1112.0 196.2 L1113.2 192.2 L1114.4 198.9 L1115.6 194.9 L1116.8 190.6 L1118.0 190.5 L1119.2 192.6 L1120.4 198.6 L1121.6 192.9 L1122.8 188.9 L1124.0 189.7 L1125.2 239.8 L1125.5 309.9 L1125.5 309.9 L1126.7 309.9 L1127.9 309.9 L1129.1 309.9 L1130.3 309.9 L1131.5 309.9 L1132.7 309.9 L1133.9 309.9 L1135.1 309.9 L1136.3 309.9 L1137.5 309.9 L1138.7 309.9 L1139.9 309.9 L1141.1 309.9 L1142.3 309.9 L1143.5 308.8 L1144.7 304.8 L1145.9 299.8 L1147.1 300.8 L1148.3 297.5 L1149.5 297.2 L1150.7 294.8 L1151.9 292.3 L1153.1 286.9 L1154.3 289.6 L1155.5 282.8 L1156.7 284.1 L1157.9 280.3 L1159.1 282.4 L1160.3 278.2 L1161.5 280.7 L1162.7 276.4 L1163.9 273.7 L1165.1 274.1 L1166.3 270.9 L1167.5 268.6 L1168.7 267.1 L1169.9 270.9 L1171.1 265.3 L1172.3 263.7 L1173.5 263.7 L1174.7 262.6 L1175.9 255.2 L1177.1 257.4 L1178.3 256.8 L1179.5 256.0 L1180.7 260.8 L1181.9 258.9 L1183.1 262.2 L1184.3 257.3 L1185.5 262.0 L1186.7 258.9 L1187.9 255.1 L1189.1 255.3 L1190.3 258.6 L1191.5 258.2 L1192.7 252.7 L1193.9 254.4 L1195.1 256.4 L1196.3 254.6 L1197.5 254.3 L1198.7 256.9 L1199.9 255.4 L1201.1 258.8 L1202.3 252.9 L1203.5 253.0 L1204.7 250.4 L1205.9 250.1 L1207.1 253.2 L1208.3 247.9 L1209.5 253.1 L1210.7 248.8 L1211.9 251.8 L1213.1 251.7 L1214.3 252.1 L1215.5 246.0 L1216.7 237.3 L1217.9 239.1 L1219.1 235.1 L1220.3 233.8 L1221.5 228.5 L1222.7 224.8 L1223.9 221.6 L1225.1 215.9 L1226.3 215.7 L1227.5 211.1 L1228.7 204.9 L1229.9 203.5 L1231.1 206.2 L1232.3 201.2 L1233.5 202.4 L1234.7 205.6 L1235.9 205.2 L1237.1 204.1 L1238.3 200.9 L1239.5 201.8 L1240.7 200.0 L1241.9 196.2 L1243.1 197.7 L1244.3 201.3 L1245.5 202.8 L1246.7 197.7 L1247.9 202.4 L1249.1 202.3 L1250.3 200.4 L1251.5 199.2 L1252.7 200.2 L1253.9 198.7 L1255.1 205.4 L1256.3 199.6 L1257.5 198.3 L1258.7 196.5 L1259.9 197.0 L1260.0 198.4 L1264.8 309.9 L1266.0 309.9 L1267.2 309.9 L1268.4 309.9 L1269.6 309.9 L1270.8 309.9 L1272.0 309.9 L1273.2 309.9 L1274.4 309.9 L1275.6 309.9 L1276.8 309.9 L1278.0 309.9 L1279.2 309.9 L1280.4 309.9 L1281.6 309.9 L1282.8 309.0 L1284.0 303.8 L1285.2 301.5 L1286.4 303.1 L1287.6 300.2 L1288.8 300.3 L1290.0 293.0 L1291.2 293.7 L1292.4 293.7 L1293.6 293.1 L1294.8 286.8 L1296.0 281.7 L1297.2 284.0 L1298.4 284.5 L1299.6 282.5 L1300.8 279.9 L1302.0 282.1 L1303.2 272.7 L1304.4 274.3 L1305.6 275.5 L1306.8 276.5 L1308.0 267.0 L1309.2 265.6 L1310.4 261.1 L1311.6 260.4 L1312.8 262.0 L1314.0 263.4 L1315.2 257.2 L1316.4 257.3 L1317.6 254.4 L1318.8 258.1 L1320.0 254.8 L1321.2 254.3" fill="none" stroke="#21436b" stroke-width="1" stroke-opacity="0.22" stroke-dasharray="5 7"/>
<path d="M498.0 485.7 L498.4 391.2 L499.6 388.4 L500.8 387.0 L502.0 386.1 L503.2 384.4 L504.4 379.1 L505.6 377.8 L506.8 376.7 L508.0 373.4 L509.2 371.3 L510.4 370.1 L511.6 368.3 L512.8 364.3 L514.0 362.6 L515.2 360.1 L516.4 360.7 L517.6 361.6 L518.8 362.5 L520.0 362.4 L521.2 362.7 L522.4 361.9 L523.6 361.8 L524.8 360.6 L526.0 360.4 L527.2 362.1 L528.4 361.6 L529.6 363.6 L530.8 363.0 L532.0 365.6 L533.2 366.7 L534.4 370.1 L535.6 372.9 L536.8 374.6 L538.0 379.4 L539.2 379.8 L540.4 381.7 L541.6 383.3 L542.8 388.8 L544.0 390.5 L545.2 395.0 L546.4 395.0 L547.6 404.2 L548.8 411.0 L550.0 420.5 L551.2 426.3 L552.4 434.0 L553.6 442.1 L554.8 449.4 L556.0 456.4 L557.2 459.2 L558.4 463.1 L559.6 462.2 L560.8 466.7 L562.0 469.4 L563.2 472.2 L564.4 475.5 L565.6 477.9 L566.8 479.3 L568.0 482.5 L569.2 484.2 L570.0 485.7 L586.0 485.7 L587.2 482.7 L588.4 476.9 L589.6 472.1 L590.8 467.0 L592.0 462.7 L593.2 461.2 L594.4 456.5 L595.6 449.5 L596.8 447.5 L598.0 444.6 L599.2 437.1 L600.4 433.5 L601.6 431.3 L602.8 426.3 L604.0 423.3 L605.2 425.4 L606.4 425.5 L607.6 425.3 L608.8 423.3 L610.0 426.8 L611.2 424.5 L612.4 424.8 L613.6 424.4 L614.8 424.1 L616.0 424.9 L617.2 422.2 L618.4 420.3 L619.6 417.1 L620.8 419.4 L622.0 414.8 L623.2 412.4 L624.4 412.0 L625.6 406.7 L626.8 405.6 L628.0 406.2 L629.2 402.4 L630.4 399.2 L631.6 397.8 L632.8 396.8 L634.0 393.1 L635.2 391.4 L636.4 390.8 L637.6 387.9 L638.8 384.0 L640.0 382.0 L641.2 382.5 L642.4 380.1 L643.6 375.6 L644.8 374.5 L646.0 373.0 L647.2 371.4 L648.4 368.7 L649.6 365.8 L650.8 367.6 L652.0 361.7 L653.2 361.8 L654.4 360.2 L655.6 358.4 L656.8 358.9 L658.0 358.8 L659.2 357.6 L660.4 358.1 L661.6 356.4 L662.8 359.4 L664.0 356.7 L665.2 359.0 L666.4 357.4 L667.6 358.0 L668.8 356.5 L670.0 359.1 L671.2 357.5 L672.4 355.7 L673.6 357.4 L674.8 361.8 L676.0 363.1 L677.2 365.3 L678.4 368.6 L679.6 370.3 L680.8 373.2 L682.0 379.6 L683.2 378.7 L684.4 377.8 L685.6 385.1 L686.8 387.6 L688.0 389.8 L689.2 393.4 L690.4 397.6 L691.6 406.5 L692.8 413.1 L694.0 424.9 L695.2 433.1 L696.4 443.2 L697.6 453.2 L698.8 457.5 L700.0 460.3 L701.2 459.6 L702.4 463.8 L703.6 467.6 L704.8 468.1 L706.0 467.9 L707.2 474.6 L708.4 479.6 L709.6 484.2 L710.0 485.7 L725.0 485.7 L726.2 480.0 L727.4 481.5 L728.6 474.1 L729.8 470.5 L731.0 465.6 L732.2 462.2 L733.4 455.8 L734.6 451.2 L735.8 448.9 L737.0 446.5 L738.2 441.8 L739.4 437.3 L740.6 433.9 L741.8 430.2 L743.0 422.5 L744.2 423.5 L745.4 425.8 L746.6 425.7 L747.8 424.6 L749.0 425.5 L750.2 424.0 L751.4 423.7 L752.6 424.6 L753.8 425.8 L755.0 425.1 L756.2 426.3 L757.4 422.7 L758.6 418.0 L759.8 418.7 L761.0 415.1 L762.2 412.4 L763.4 409.8 L764.6 411.3 L765.8 407.9 L767.0 406.2 L768.2 401.8 L769.4 400.0 L770.6 400.5 L771.8 397.8 L773.0 394.6 L774.2 390.5 L775.4 391.3 L776.6 387.3 L777.8 387.7 L779.0 386.1 L780.2 381.5 L781.4 381.4 L782.6 380.2 L783.8 374.7 L785.0 373.4 L786.2 373.6 L787.4 368.9 L788.6 367.4 L789.8 365.1 L791.0 365.0 L792.2 364.2 L793.4 366.3 L794.6 366.3 L795.8 362.7 L797.0 364.3 L798.2 363.4 L799.4 364.0 L800.6 364.3 L801.8 364.3 L803.0 363.1 L804.2 364.0 L805.4 365.6 L806.6 362.3 L807.8 362.0 L809.0 362.8 L810.2 361.9 L811.4 364.3 L812.6 366.9 L813.8 368.0 L815.0 371.2 L816.2 375.7 L817.4 376.9 L818.6 379.0 L819.8 378.9 L821.0 384.0 L822.2 387.4 L823.4 390.2 L824.6 391.6 L825.8 394.6 L827.0 401.1 L828.2 410.3 L829.4 419.2 L830.6 425.7 L831.8 433.1 L833.0 441.5 L834.2 451.7 L835.4 456.8 L836.6 459.1 L837.8 463.4 L839.0 468.2 L840.2 471.6 L841.4 474.8 L842.6 476.1 L843.8 478.9 L845.0 479.9 L846.2 482.4 L847.4 484.7 L848.0 485.7 L865.0 485.7 L866.2 481.9 L867.4 477.4 L868.6 471.6 L869.8 468.7 L871.0 465.5 L872.2 460.4 L873.4 456.6 L874.6 451.0 L875.8 446.5 L877.0 440.6 L878.2 437.4 L879.4 432.8 L880.6 427.4 L881.8 426.9 L883.0 428.8 L884.2 427.9 L885.4 428.6 L886.6 428.0 L887.8 426.3 L889.0 424.3 L890.2 426.8 L891.4 427.5 L892.6 428.7 L893.8 427.4 L895.0 425.9 L896.2 426.7 L897.4 423.2 L898.6 420.6 L899.8 418.4 L901.0 414.6 L902.2 415.4 L903.4 413.1 L904.6 412.6 L905.8 409.9 L907.0 408.4 L908.2 405.1 L909.4 402.6 L910.6 400.3 L911.8 398.1 L913.0 397.6 L914.2 396.2 L915.4 394.1 L916.6 391.2 L917.8 389.3 L919.0 388.2 L920.2 384.2 L921.4 384.0 L922.6 380.7 L923.8 379.2 L925.0 376.1 L926.2 373.8 L927.4 373.5 L928.6 370.8 L929.8 368.9 L931.0 370.8 L932.2 372.6 L933.4 368.7 L934.6 372.5 L935.8 370.5 L937.0 372.6 L938.2 370.4 L939.4 371.5 L940.6 370.7 L941.8 371.1 L943.0 373.1 L944.2 373.3 L945.4 372.4 L946.6 371.3 L947.8 374.1 L949.0 375.1 L950.2 377.1 L951.4 378.6 L952.6 383.9 L953.8 386.2 L955.0 388.2 L956.2 387.3 L957.4 391.5 L958.6 392.7 L959.8 392.8 L961.0 397.7 L962.2 405.7 L963.4 413.8 L964.6 419.3 L965.8 426.9 L967.0 435.8 L968.2 444.1 L969.4 451.5 L970.6 456.6 L971.8 459.4 L973.0 465.5 L974.2 468.9 L975.4 470.6 L976.6 473.9 L977.8 477.8 L979.0 481.0 L980.2 483.7 L981.0 485.7 L1003.0 485.7 L1004.2 482.8 L1005.4 476.4 L1006.6 473.3 L1007.8 468.4 L1009.0 466.7 L1010.2 459.1 L1011.4 455.9 L1012.6 452.3 L1013.8 447.7 L1015.0 444.0 L1016.2 439.7 L1017.4 438.0 L1018.6 432.2 L1019.8 425.5 L1021.0 422.8 L1022.2 419.4 L1023.4 415.0 L1024.6 413.7 L1025.8 415.6 L1027.0 414.6 L1028.2 416.3 L1029.4 417.7 L1030.6 413.7 L1031.8 416.4 L1033.0 414.6 L1034.2 412.0 L1035.4 408.9 L1036.6 409.2 L1037.8 404.9 L1039.0 405.0 L1040.2 403.3 L1041.4 401.2 L1042.6 396.6 L1043.8 396.4 L1045.0 389.0 L1046.2 388.6 L1047.4 386.3 L1048.6 384.8 L1049.8 381.8 L1051.0 381.1 L1052.2 379.5 L1053.4 376.9 L1054.6 372.9 L1055.8 371.2 L1057.0 368.5 L1058.2 368.2 L1059.4 363.3 L1060.6 360.4 L1061.8 359.1 L1063.0 360.1 L1064.2 355.6 L1065.4 352.7 L1066.6 350.2 L1067.8 351.2 L1069.0 350.5 L1070.2 352.7 L1071.4 352.3 L1072.6 352.3 L1073.8 349.8 L1075.0 353.6 L1076.2 352.0 L1077.4 353.7 L1078.6 349.5 L1079.8 350.6 L1081.0 352.5 L1082.2 350.6 L1083.4 350.6 L1084.6 351.8 L1085.8 352.6 L1087.0 355.4 L1088.2 357.6 L1089.4 361.7 L1090.6 362.9 L1091.8 363.1 L1093.0 365.9 L1094.2 365.7 L1095.4 368.9 L1096.6 372.2 L1097.8 377.3 L1099.0 377.9 L1100.2 380.1 L1101.4 386.3 L1102.6 396.4 L1103.8 407.1 L1105.0 412.6 L1106.2 420.7 L1107.4 428.7 L1108.6 436.8 L1109.8 448.0 L1111.0 455.2 L1112.2 457.7 L1113.4 460.4 L1114.6 465.4 L1115.8 466.5 L1117.0 469.8 L1118.2 476.6 L1119.4 475.1 L1120.6 477.7 L1121.8 480.9 L1123.0 482.7 L1124.2 484.3 L1125.0 485.7 L1143.0 485.7 L1144.2 482.9 L1145.4 477.0 L1146.6 471.7 L1147.8 470.2 L1149.0 462.5 L1150.2 458.7 L1151.4 453.8 L1152.6 450.1 L1153.8 443.6 L1155.0 440.7 L1156.2 436.1 L1157.4 430.0 L1158.6 426.8 L1159.8 428.5 L1161.0 428.2 L1162.2 426.9 L1163.4 427.3 L1164.6 427.7 L1165.8 426.5 L1167.0 426.8 L1168.2 429.1 L1169.4 429.1 L1170.6 425.6 L1171.8 427.4 L1173.0 426.7 L1174.2 422.7 L1175.4 420.0 L1176.6 417.0 L1177.8 413.7 L1179.0 414.0 L1180.2 414.3 L1181.4 410.5 L1182.6 406.9 L1183.8 403.7 L1185.0 403.7 L1186.2 402.4 L1187.4 399.8 L1188.6 398.9 L1189.8 396.4 L1191.0 390.2 L1192.2 388.8 L1193.4 389.5 L1194.6 388.2 L1195.8 383.6 L1197.0 381.6 L1198.2 379.8 L1199.4 380.7 L1200.6 376.3 L1201.8 375.2 L1203.0 370.7 L1204.2 373.2 L1205.4 366.9 L1206.6 367.5 L1207.8 365.5 L1209.0 367.2 L1210.2 365.0 L1211.4 366.7 L1212.6 367.0 L1213.8 366.7 L1215.0 364.2 L1216.2 366.9 L1217.4 365.4 L1218.6 364.6 L1219.8 366.9 L1221.0 365.4 L1222.2 365.6 L1223.4 364.1 L1224.6 368.7 L1225.8 369.4 L1227.0 373.5 L1228.2 375.9 L1229.4 375.4 L1230.6 377.3 L1231.8 379.4 L1233.0 385.7 L1234.2 382.4 L1235.4 385.8 L1236.6 388.0 L1237.8 387.7 L1239.0 391.4 L1240.2 395.2 L1241.4 404.0 L1242.6 410.2 L1243.8 416.2 L1245.0 427.3 L1246.2 431.6 L1247.4 440.0 L1248.6 447.5 L1249.8 452.7 L1251.0 461.5 L1252.2 466.4 L1253.4 468.9 L1254.6 470.5 L1255.8 473.5 L1257.0 479.8 L1258.2 481.9 L1259.4 484.1 L1260.0 485.7 L1282.2 485.7 L1283.5 482.2 L1284.7 476.2 L1285.9 473.9 L1287.1 468.1 L1288.3 464.3 L1289.5 458.5 L1290.7 453.9 L1291.9 449.4 L1293.1 446.6 L1294.3 442.7 L1295.5 437.9 L1296.7 431.2 L1297.9 429.5 L1299.1 425.0 L1300.3 424.6 L1301.5 425.9 L1302.7 423.6 L1303.9 423.8 L1305.1 424.5 L1306.3 425.3 L1307.5 425.1 L1308.7 425.2 L1309.9 426.6 L1311.1 425.3 L1312.3 423.3 L1313.5 421.9 L1314.7 420.9 L1315.9 417.5 L1317.1 416.7 L1318.3 415.1 L1319.5 412.2 L1320.7 409.8 L1321.9 405.9" fill="none" stroke="#ff4f00" stroke-width="1" stroke-opacity="0.22" stroke-dasharray="5 7"/>
<path d="M498.0 525.3 H568.5 V661.3 H586.0 V525.3 H708.0 V661.3 H725.0 V525.3 H847.0 V661.3 H865.0 V525.3 H986.0 V661.3 H1004.0 V525.3 H1125.5 V661.3 H1143.0 V525.3 H1264.0 V661.3 H1282.2 V525.3 H1322.0" fill="none" stroke="#2f8007" stroke-width="1.1" stroke-opacity="0.2" stroke-dasharray="6 6"/>
<path d="M498.0 309.9 L510.0 309.9 L511.2 305.4 L512.4 301.7 L513.6 297.1 L514.8 293.0 L516.0 288.5 L517.2 284.4 L518.4 279.4 L519.6 275.5 L520.8 271.3 L522.0 268.1 L523.2 263.4 L524.4 259.2 L525.6 254.6 L526.8 254.6 L528.0 253.8 L529.2 252.7 L530.4 253.6 L531.6 252.1 L532.8 253.5 L534.0 253.2 L535.2 251.4 L536.4 252.5 L537.6 253.8 L538.8 253.4 L540.0 252.5 L541.2 250.8 L542.4 253.4 L543.6 253.3 L544.8 251.9 L546.0 254.1 L547.2 253.3 L548.4 251.9 L549.6 252.3 L550.8 252.8 L552.0 252.1 L553.2 256.2 L554.4 251.7 L555.6 254.0 L556.8 254.8 L558.0 252.5 L559.2 252.0 L560.4 253.3 L561.6 254.0 L562.8 252.7 L564.0 252.8 L565.2 251.0 L566.4 251.8 L567.6 252.4 L568.8 251.3 L570.0 252.9 L571.2 253.7 L572.4 251.9 L573.6 249.6 L574.8 243.9 L576.0 237.8 L577.2 232.0 L578.4 225.9 L579.6 219.5 L580.8 214.0 L582.0 207.9 L583.2 201.7 L584.4 195.8 L585.6 189.5 L586.8 184.7 L588.0 177.8 L589.2 173.8 L590.4 176.9 L591.6 179.9 L592.8 183.1 L594.0 186.3 L595.2 189.9 L596.4 193.1 L597.6 198.5 L598.8 203.2 L600.0 207.6 L601.2 212.8 L602.4 216.6 L603.6 221.7 L604.8 226.1 L606.0 231.5 L607.2 236.4 L608.4 240.9 L609.6 245.5 L610.8 250.6 L612.0 255.1 L613.2 259.9 L614.4 264.2 L615.6 268.2 L616.8 269.6 L618.0 272.0 L619.2 274.0 L620.4 275.9 L621.6 278.0 L622.8 279.5 L624.0 281.1 L625.2 283.3 L626.4 285.1 L627.6 286.7 L628.8 289.0 L630.0 290.9 L630.5 309.9 L648.0 309.9 L649.2 306.2 L650.4 302.0 L651.6 298.0 L652.8 294.6 L654.0 291.2 L655.2 287.4 L656.4 283.2 L657.6 279.1 L658.8 275.4 L660.0 271.5 L661.2 268.0 L662.4 264.0 L663.6 260.4 L664.8 256.5 L666.0 253.0 L667.2 251.9 L668.4 249.6 L669.6 250.9 L670.8 248.2 L672.0 248.0 L673.2 251.9 L674.4 249.5 L675.6 249.8 L676.8 250.9 L678.0 249.1 L679.2 250.3 L680.4 251.9 L681.6 250.1 L682.8 250.0 L684.0 249.8 L685.2 251.4 L686.4 249.2 L687.6 249.1 L688.8 251.4 L690.0 250.8 L691.2 250.2 L692.4 250.8 L693.6 248.1 L694.8 250.0 L696.0 251.4 L697.2 251.2 L698.4 250.4 L699.6 247.6 L700.8 250.6 L702.0 250.3 L703.2 249.8 L704.4 250.5 L705.6 247.8 L706.8 251.2 L708.0 249.7 L709.2 250.4 L710.4 249.9 L711.6 252.1 L712.8 248.6 L714.0 246.1 L715.2 240.1 L716.4 235.1 L717.6 228.8 L718.8 222.3 L720.0 217.2 L721.2 211.4 L722.4 205.8 L723.6 199.4 L724.8 193.8 L726.0 188.4 L727.2 182.0 L728.4 179.8 L729.6 184.2 L730.8 189.2 L732.0 193.0 L733.2 197.9 L734.4 202.6 L735.6 207.3 L736.8 211.7 L738.0 215.9 L739.2 220.8 L740.4 224.9 L741.6 229.6 L742.8 233.9 L744.0 238.6 L745.2 243.0 L746.4 247.7 L747.6 251.2 L748.8 255.1 L750.0 259.5 L751.2 263.5 L752.4 267.9 L753.6 272.0 L754.8 276.3 L756.0 279.7 L757.2 284.0 L758.4 286.9 L759.6 289.9 L760.8 292.2 L762.0 294.4 L763.2 297.4 L764.4 300.3 L765.6 301.7 L766.8 303.8 L768.0 306.1 L769.2 308.5 L770.0 309.9 L787.0 309.9 L788.2 306.0 L789.4 301.8 L790.6 297.8 L791.8 293.5 L793.0 290.0 L794.2 285.8 L795.4 281.6 L796.6 277.4 L797.8 273.5 L799.0 269.6 L800.2 265.7 L801.4 261.2 L802.6 256.8 L803.8 253.1 L805.0 251.3 L806.2 251.0 L807.4 252.3 L808.6 252.3 L809.8 252.1 L811.0 251.0 L812.2 253.5 L813.4 253.7 L814.6 252.0 L815.8 253.4 L817.0 252.7 L818.2 251.9 L819.4 251.4 L820.6 253.1 L821.8 250.9 L823.0 253.9 L824.2 251.1 L825.4 253.5 L826.6 253.1 L827.8 250.8 L829.0 252.0 L830.2 252.4 L831.4 251.9 L832.6 250.8 L833.8 251.4 L835.0 251.3 L836.2 250.0 L837.4 252.0 L838.6 251.7 L839.8 251.7 L841.0 249.6 L842.2 249.8 L843.4 249.4 L844.6 250.9 L845.8 251.0 L847.0 249.8 L848.2 250.1 L849.4 243.4 L850.6 237.9 L851.8 231.9 L853.0 225.7 L854.2 220.2 L855.4 213.9 L856.6 207.7 L857.8 201.8 L859.0 195.9 L860.2 190.2 L861.4 183.9 L862.6 178.2 L863.8 173.5 L865.0 178.0 L866.2 184.0 L867.4 189.3 L868.6 193.6 L869.8 198.3 L871.0 202.9 L872.2 207.9 L873.4 213.9 L874.6 219.2 L875.8 224.0 L877.0 230.1 L878.2 234.8 L879.4 240.6 L880.6 245.7 L881.8 251.1 L883.0 256.4 L884.2 261.8 L885.4 267.8 L886.6 272.7 L887.8 278.2 L889.0 283.5 L890.2 284.9 L891.4 287.1 L892.6 289.0 L893.8 290.7 L895.0 292.3 L896.2 293.7 L897.4 295.9 L898.6 297.0 L899.8 299.0 L901.0 300.6 L902.2 302.4 L903.4 303.3 L904.6 304.5 L905.8 306.7 L907.0 307.6 L908.2 309.0 L909.0 309.9 L927.0 309.9 L928.2 305.3 L929.4 302.1 L930.6 298.0 L931.8 294.5 L933.0 289.7 L934.2 286.6 L935.4 282.2 L936.6 278.3 L937.8 274.7 L939.0 270.2 L940.2 267.0 L941.4 262.8 L942.6 258.6 L943.8 258.2 L945.0 256.6 L946.2 255.5 L947.4 257.5 L948.6 255.4 L949.8 256.7 L951.0 257.5 L952.2 255.0 L953.4 257.8 L954.6 255.5 L955.8 257.3 L957.0 256.1 L958.2 258.0 L959.4 257.5 L960.6 255.2 L961.8 256.2 L963.0 256.3 L964.2 256.8 L965.4 255.7 L966.6 257.8 L967.8 257.4 L969.0 256.2 L970.2 257.0 L971.4 256.7 L972.6 255.9 L973.8 256.0 L975.0 256.0 L976.2 253.7 L977.4 254.4 L978.6 254.1 L979.8 255.5 L981.0 256.0 L982.2 257.1 L983.4 255.7 L984.6 257.7 L985.8 255.9 L987.0 254.3 L988.2 253.2 L989.4 253.9 L990.6 256.0 L991.8 254.3 L993.0 255.8 L994.2 253.8 L995.4 254.9 L996.6 253.7 L997.8 250.4 L999.0 244.3 L1000.2 237.2 L1001.4 230.4 L1002.6 224.0 L1003.8 217.3 L1005.0 211.4 L1006.2 205.0 L1007.4 197.5 L1008.6 191.0 L1009.8 185.2 L1011.0 188.0 L1012.2 193.3 L1013.4 198.4 L1014.6 203.8 L1015.8 209.2 L1017.0 214.3 L1018.2 219.6 L1019.4 224.9 L1020.6 230.7 L1021.8 236.3 L1023.0 240.8 L1024.2 246.2 L1025.4 250.8 L1026.6 255.8 L1027.8 261.1 L1029.0 266.5 L1030.2 271.5 L1031.4 276.3 L1032.6 282.1 L1033.8 285.1 L1035.0 287.9 L1036.2 290.7 L1037.4 293.1 L1038.6 296.5 L1039.8 298.6 L1041.0 301.2 L1042.2 302.9 L1043.4 304.8 L1044.6 306.2 L1045.8 308.1 L1047.0 309.9 L1066.0 309.9 L1067.2 306.0 L1068.4 302.8 L1069.6 298.8 L1070.8 294.6 L1072.0 291.4 L1073.2 288.0 L1074.4 284.5 L1075.6 280.5 L1076.8 277.5 L1078.0 274.4 L1079.2 270.0 L1080.4 266.4 L1081.6 261.9 L1082.8 261.4 L1084.0 262.5 L1085.2 259.4 L1086.4 260.4 L1087.6 263.1 L1088.8 262.9 L1090.0 261.8 L1091.2 263.4 L1092.4 261.2 L1093.6 261.1 L1094.8 261.9 L1096.0 261.7 L1097.2 260.4 L1098.4 259.3 L1099.6 259.2 L1100.8 260.9 L1102.0 259.9 L1103.2 261.8 L1104.4 260.4 L1105.6 262.0 L1106.8 260.0 L1108.0 262.3 L1109.2 261.9 L1110.4 260.8 L1111.6 260.1 L1112.8 262.4 L1114.0 261.3 L1115.2 260.5 L1116.4 260.4 L1117.6 261.6 L1118.8 260.5 L1120.0 260.9 L1121.2 258.9 L1122.4 259.9 L1123.6 262.1 L1124.8 263.1 L1126.0 260.4 L1127.2 259.1 L1128.4 260.3 L1129.6 258.0 L1130.8 251.8 L1132.0 246.7 L1133.2 241.9 L1134.4 235.9 L1135.6 230.8 L1136.8 225.4 L1138.0 220.1 L1139.2 215.0 L1140.4 209.6 L1141.6 203.9 L1142.8 198.7 L1144.0 193.7 L1145.2 189.2 L1146.4 195.7 L1147.6 201.5 L1148.8 207.3 L1150.0 212.6 L1151.2 218.2 L1152.4 224.2 L1153.6 229.7 L1154.8 236.2 L1156.0 241.6 L1157.2 246.7 L1158.4 251.6 L1159.6 256.5 L1160.8 262.3 L1162.0 265.8 L1163.2 272.1 L1164.4 276.7 L1165.6 281.6 L1166.8 285.4 L1168.0 288.8 L1169.2 292.9 L1170.4 295.5 L1171.6 298.1 L1172.8 301.1 L1174.0 303.2 L1175.2 305.7 L1176.4 306.7 L1177.6 309.2 L1178.0 309.9 L1205.0 309.9 L1206.2 305.7 L1207.4 301.8 L1208.6 297.6 L1209.8 294.1 L1211.0 289.5 L1212.2 285.1 L1213.4 281.9 L1214.6 277.2 L1215.8 273.3 L1217.0 269.4 L1218.2 265.6 L1219.4 261.9 L1220.6 257.7 L1221.8 253.2 L1223.0 248.6 L1224.2 250.7 L1225.4 248.6 L1226.6 248.8 L1227.8 249.4 L1229.0 248.8 L1230.2 250.2 L1231.4 251.9 L1232.6 249.6 L1233.8 250.3 L1235.0 248.2 L1236.2 248.9 L1237.4 249.8 L1238.6 249.1 L1239.8 247.6 L1241.0 247.8 L1242.2 248.7 L1243.4 248.6 L1244.6 249.5 L1245.8 249.3 L1247.0 248.4 L1248.2 249.2 L1249.4 248.7 L1250.6 250.4 L1251.8 251.0 L1253.0 251.0 L1254.2 249.5 L1255.4 247.4 L1256.6 247.6 L1257.8 250.1 L1259.0 250.8 L1260.2 248.0 L1261.4 248.4 L1262.6 250.5 L1263.8 247.6 L1265.0 248.7 L1266.2 248.3 L1267.4 242.0 L1268.6 235.3 L1269.8 229.6 L1271.0 223.5 L1272.2 217.7 L1273.4 211.2 L1274.6 205.4 L1275.8 199.7 L1277.0 193.5 L1278.2 187.2 L1279.4 180.8 L1280.6 175.2 L1281.8 176.8 L1283.0 182.1 L1284.2 188.7 L1285.4 194.6 L1286.6 199.6 L1287.8 205.5 L1289.0 211.4 L1290.2 217.0 L1291.4 223.0 L1292.6 227.8 L1293.8 232.5 L1295.0 236.7 L1296.2 241.8 L1297.4 246.1 L1298.6 250.3 L1299.8 255.0 L1301.0 259.1 L1302.2 263.8 L1303.4 267.5 L1304.6 269.0 L1305.8 271.0 L1307.0 273.1 L1308.2 274.7 L1309.4 276.3 L1310.6 278.0 L1311.8 279.5 L1313.0 281.0 L1314.2 282.9 L1315.4 284.3 L1316.6 286.5 L1317.8 289.4 L1319.0 291.2 L1320.2 293.8 L1321.4 296.7 L1322.0 297.7 L1322.0 297.7" fill="none" stroke="#c4005a" stroke-width="1.25" stroke-linejoin="round"/>
<line x1="498.0" x2="498.0" y1="173.1" y2="309.9" stroke="#c4005a" stroke-width="1.3"/>
<path d="M498.0 309.9 L499.5 309.9 L501.0 309.9 L502.5 309.9 L504.0 309.9 L505.5 309.9 L507.0 309.9 L508.5 309.9 L510.0 309.9 L511.5 303.7 L513.0 303.9 L514.5 304.4 L516.0 301.1 L517.5 293.0 L519.0 293.7 L520.5 295.8 L522.0 290.4 L523.5 290.6 L525.0 287.6 L526.5 285.3 L528.0 283.8 L529.5 279.1 L531.0 278.5 L532.5 278.1 L534.0 274.4 L535.5 272.0 L537.0 275.7 L538.5 271.2 L540.0 271.2 L541.5 268.0 L543.0 268.8 L544.5 264.5 L546.0 263.1 L547.5 262.6 L549.0 263.8 L550.5 262.0 L552.0 263.1 L553.5 263.3 L555.0 259.6 L556.5 262.1 L558.0 256.9 L559.5 257.5 L561.0 262.8 L562.5 257.7 L564.0 260.2 L565.5 257.5 L567.0 257.1 L568.5 261.0 L570.0 257.0 L571.5 256.6 L573.0 251.8 L574.5 253.1 L576.0 245.9 L577.5 246.5 L579.0 241.7 L580.5 239.6 L582.0 231.5 L583.5 230.0 L585.0 222.8 L586.5 223.3 L588.0 219.6 L589.5 216.3 L591.0 216.1 L592.5 212.5 L594.0 208.9 L595.5 211.9 L597.0 210.0 L598.5 209.8 L600.0 207.8 L601.5 209.2 L603.0 208.1 L604.5 206.6 L606.0 206.2 L607.5 207.6 L609.0 203.3 L610.5 207.3 L612.0 206.7 L613.5 206.5 L615.0 201.4 L616.5 203.7 L618.0 204.6 L619.5 204.6 L621.0 200.9 L622.5 203.6 L624.0 203.7 L625.5 199.3 L627.0 202.7 L628.5 200.5 L630.0 199.5 L630.5 199.5 L630.5 309.9 L630.5 309.9 L632.0 309.9 L633.5 309.9 L635.0 309.9 L636.5 309.9 L638.0 309.9 L639.5 309.9 L641.0 309.9 L642.5 309.9 L644.0 309.9 L645.5 309.9 L647.0 309.9 L648.5 309.0 L650.0 306.1 L651.5 304.6 L653.0 300.9 L654.5 294.5 L656.0 294.9 L657.5 296.6 L659.0 287.0 L660.5 287.3 L662.0 287.7 L663.5 281.4 L665.0 280.9 L666.5 279.9 L668.0 277.6 L669.5 276.0 L671.0 271.6 L672.5 267.3 L674.0 268.1 L675.5 264.4 L677.0 259.2 L678.5 263.6 L680.0 258.4 L681.5 257.4 L683.0 256.9 L684.5 256.5 L686.0 254.0 L687.5 252.7 L689.0 254.4 L690.5 252.8 L692.0 251.1 L693.5 251.6 L695.0 250.1 L696.5 250.6 L698.0 250.2 L699.5 247.0 L701.0 249.2 L702.5 249.9 L704.0 248.3 L705.5 251.4 L707.0 249.8 L708.5 247.1 L710.0 247.1 L711.5 244.8 L713.0 247.7 L714.5 250.4 L716.0 242.9 L717.5 243.2 L719.0 243.7 L720.5 234.7 L722.0 233.6 L723.5 233.5 L725.0 226.6 L726.5 222.9 L728.0 214.5 L729.5 215.6 L731.0 210.5 L732.5 206.6 L734.0 205.2 L735.5 205.8 L737.0 203.0 L738.5 200.7 L740.0 201.2 L741.5 204.0 L743.0 204.0 L744.5 200.9 L746.0 202.2 L747.5 201.5 L749.0 203.3 L750.5 195.2 L752.0 196.9 L753.5 200.5 L755.0 196.1 L756.5 194.7 L758.0 202.1 L759.5 197.8 L761.0 197.0 L762.5 194.4 L764.0 195.6 L765.5 195.4 L767.0 194.6 L770.0 194.6 L770.0 309.9 L770.0 309.9 L771.5 309.9 L773.0 309.9 L774.5 309.9 L776.0 309.9 L777.5 309.9 L779.0 309.9 L780.5 309.9 L782.0 309.9 L783.5 309.9 L785.0 309.9 L786.5 309.9 L788.0 308.5 L789.5 305.8 L791.0 300.3 L792.5 302.1 L794.0 302.8 L795.5 300.1 L797.0 292.7 L798.5 294.8 L800.0 295.9 L801.5 291.3 L803.0 288.6 L804.5 284.7 L806.0 287.9 L807.5 282.9 L809.0 281.2 L810.5 282.9 L812.0 279.3 L813.5 272.1 L815.0 269.1 L816.5 267.9 L818.0 265.9 L819.5 261.1 L821.0 260.7 L822.5 258.4 L824.0 259.7 L825.5 257.4 L827.0 257.2 L828.5 250.9 L830.0 256.7 L831.5 253.3 L833.0 252.8 L834.5 255.6 L836.0 252.3 L837.5 259.0 L839.0 253.8 L840.5 251.8 L842.0 258.3 L843.5 255.3 L845.0 250.3 L846.5 252.6 L848.0 254.0 L849.5 252.1 L851.0 252.1 L852.5 249.0 L854.0 249.2 L855.5 250.4 L857.0 250.8 L858.5 246.1 L860.0 239.7 L861.5 238.3 L863.0 234.3 L864.5 232.5 L866.0 231.5 L867.5 227.1 L869.0 221.0 L870.5 218.8 L872.0 217.7 L873.5 216.8 L875.0 212.4 L876.5 212.6 L878.0 211.9 L879.5 211.1 L881.0 209.1 L882.5 208.3 L884.0 206.2 L885.5 205.5 L887.0 203.9 L888.5 204.2 L890.0 205.9 L891.5 204.7 L893.0 203.0 L894.5 204.3 L896.0 202.0 L897.5 200.3 L899.0 203.9 L900.5 205.5 L902.0 198.8 L903.5 200.8 L905.0 198.9 L906.5 202.7 L908.0 195.8 L909.0 195.8 L909.0 309.9 L909.0 309.9 L910.5 309.9 L912.0 309.9 L913.5 309.9 L915.0 309.9 L916.5 309.9 L918.0 309.9 L919.5 309.9 L921.0 309.9 L922.5 309.9 L924.0 309.9 L925.5 309.9 L927.0 309.9 L928.5 307.9 L930.0 305.0 L931.5 301.6 L933.0 301.0 L934.5 294.5 L936.0 295.0 L937.5 292.7 L939.0 289.9 L940.5 285.0 L942.0 281.0 L943.5 281.0 L945.0 280.2 L946.5 272.0 L948.0 273.7 L949.5 266.2 L951.0 266.9 L952.5 266.7 L954.0 265.0 L955.5 261.1 L957.0 258.6 L958.5 259.3 L960.0 255.3 L961.5 252.7 L963.0 257.3 L964.5 259.1 L966.0 258.7 L967.5 259.2 L969.0 257.4 L970.5 257.3 L972.0 258.4 L973.5 254.3 L975.0 260.7 L976.5 257.7 L978.0 250.5 L979.5 252.3 L981.0 253.2 L982.5 253.1 L984.0 250.2 L985.5 252.5 L987.0 253.3 L988.5 255.8 L990.0 253.2 L991.5 254.4 L993.0 254.1 L994.5 253.9 L996.0 252.3 L997.5 251.5 L999.0 245.4 L1000.5 246.5 L1002.0 240.4 L1003.5 232.6 L1005.0 232.8 L1006.5 226.8 L1008.0 223.3 L1009.5 219.7 L1011.0 217.6 L1012.5 218.8 L1014.0 213.2 L1015.5 210.1 L1017.0 209.3 L1018.5 203.7 L1020.0 202.1 L1021.5 202.5 L1023.0 198.2 L1024.5 198.3 L1026.0 199.3 L1027.5 199.5 L1029.0 198.2 L1030.5 197.5 L1032.0 197.1 L1033.5 196.0 L1035.0 196.4 L1036.5 194.2 L1038.0 193.4 L1039.5 193.3 L1041.0 194.9 L1042.5 194.3 L1044.0 191.6 L1045.5 192.5 L1047.0 191.6 L1048.0 191.6 L1048.0 309.9 L1048.0 309.9 L1049.5 309.9 L1051.0 309.9 L1052.5 309.9 L1054.0 309.9 L1055.5 309.9 L1057.0 309.9 L1058.5 309.9 L1060.0 309.9 L1061.5 309.9 L1063.0 309.9 L1064.5 309.9 L1066.0 309.9 L1067.5 306.4 L1069.0 302.1 L1070.5 302.1 L1072.0 298.9 L1073.5 296.9 L1075.0 292.9 L1076.5 285.7 L1078.0 287.0 L1079.5 281.4 L1081.0 279.9 L1082.5 277.8 L1084.0 275.3 L1085.5 276.9 L1087.0 271.6 L1088.5 266.8 L1090.0 269.3 L1091.5 266.4 L1093.0 266.2 L1094.5 262.6 L1096.0 264.0 L1097.5 256.8 L1099.0 259.5 L1100.5 260.4 L1102.0 251.9 L1103.5 252.5 L1105.0 253.2 L1106.5 252.9 L1108.0 254.4 L1109.5 253.9 L1111.0 251.6 L1112.5 250.9 L1114.0 250.6 L1115.5 251.8 L1117.0 252.9 L1118.5 252.1 L1120.0 249.0 L1121.5 248.0 L1123.0 251.5 L1124.5 251.5 L1126.0 247.6 L1127.5 248.4 L1129.0 248.1 L1130.5 251.3 L1132.0 246.7 L1133.5 244.4 L1135.0 240.2 L1136.5 241.6 L1138.0 232.7 L1139.5 232.1 L1141.0 229.2 L1142.5 230.0 L1144.0 224.9 L1145.5 219.5 L1147.0 223.3 L1148.5 217.1 L1150.0 213.9 L1151.5 214.5 L1153.0 209.0 L1154.5 209.1 L1156.0 203.5 L1157.5 202.7 L1159.0 201.0 L1160.5 194.9 L1162.0 195.1 L1163.5 193.8 L1165.0 198.7 L1166.5 197.3 L1168.0 193.8 L1169.5 193.4 L1171.0 195.1 L1172.5 193.0 L1174.0 196.6 L1175.5 193.6 L1177.0 196.2 L1178.5 192.7 L1180.0 194.1 L1181.5 194.1 L1183.0 192.3 L1184.5 188.3 L1186.0 193.9 L1187.5 193.9 L1187.5 309.9 L1187.5 309.9 L1189.0 309.9 L1190.5 309.9 L1192.0 309.9 L1193.5 309.9 L1195.0 309.9 L1196.5 309.9 L1198.0 309.9 L1199.5 309.9 L1201.0 309.9 L1202.5 309.9 L1204.0 309.9 L1205.5 308.8 L1207.0 302.6 L1208.5 300.8 L1210.0 298.3 L1211.5 294.9 L1213.0 294.2 L1214.5 289.2 L1216.0 289.3 L1217.5 284.5 L1219.0 284.6 L1220.5 281.4 L1222.0 277.9 L1223.5 277.4 L1225.0 273.2 L1226.5 271.5 L1228.0 269.9 L1229.5 266.1 L1231.0 270.2 L1232.5 268.7 L1234.0 262.2 L1235.5 259.7 L1237.0 255.7 L1238.5 258.0 L1240.0 257.5 L1241.5 260.7 L1243.0 256.9 L1244.5 256.7 L1246.0 260.0 L1247.5 259.3 L1249.0 257.3 L1250.5 256.1 L1252.0 262.6 L1253.5 255.9 L1255.0 255.2 L1256.5 255.7 L1258.0 254.4 L1259.5 253.7 L1261.0 256.4 L1262.5 253.0 L1264.0 254.1 L1265.5 255.2 L1267.0 252.3 L1268.5 249.2 L1270.0 254.9 L1271.5 254.8 L1273.0 254.4 L1274.5 246.2 L1276.0 250.5 L1277.5 246.0 L1279.0 243.5 L1280.5 239.8 L1282.0 238.0 L1283.5 229.4 L1285.0 224.9 L1286.5 225.1 L1288.0 218.7 L1289.5 213.7 L1291.0 207.7 L1292.5 204.1 L1294.0 201.9 L1295.5 201.1 L1297.0 201.4 L1298.5 200.5 L1300.0 205.4 L1301.5 203.8 L1303.0 199.9 L1304.5 201.4 L1306.0 201.6 L1307.5 205.5 L1309.0 204.9 L1310.5 199.1 L1312.0 199.6 L1313.5 200.5 L1315.0 200.4 L1316.5 202.8 L1318.0 198.0 L1319.5 196.3 L1321.0 194.6" fill="none" stroke="#1f3f66" stroke-width="1.2" stroke-linejoin="round"/>
<path d="M498.0 485.7 L499.2 485.7 L500.4 485.7 L501.6 485.7 L502.8 485.7 L504.0 485.7 L505.2 485.7 L506.4 485.7 L507.6 485.7 L508.8 485.7 L510.0 484.4 L511.2 476.6 L512.4 474.0 L513.6 467.0 L514.8 464.7 L516.0 461.1 L517.2 458.0 L518.4 451.6 L519.6 449.5 L520.8 443.1 L522.0 441.0 L523.2 436.2 L524.4 433.9 L525.6 427.7 L526.8 430.4 L528.0 430.8 L529.2 429.5 L530.4 431.4 L531.6 429.7 L532.8 431.8 L534.0 430.1 L535.2 431.8 L536.4 432.7 L537.6 430.4 L538.8 429.3 L540.0 425.0 L541.2 423.5 L542.4 421.0 L543.6 419.3 L544.8 417.7 L546.0 415.3 L547.2 412.1 L548.4 411.4 L549.6 409.9 L550.8 408.1 L552.0 405.2 L553.2 403.7 L554.4 398.8 L555.6 400.0 L556.8 397.8 L558.0 394.9 L559.2 391.8 L560.4 390.8 L561.6 389.4 L562.8 387.2 L564.0 384.6 L565.2 381.2 L566.4 381.2 L567.6 378.2 L568.8 376.7 L570.0 373.6 L571.2 371.4 L572.4 371.4 L573.6 365.2 L574.8 365.5 L576.0 364.1 L577.2 362.8 L578.4 362.2 L579.6 361.9 L580.8 361.3 L582.0 362.0 L583.2 361.5 L584.4 363.7 L585.6 362.8 L586.8 363.1 L588.0 361.9 L589.2 361.6 L590.4 363.7 L591.6 362.3 L592.8 361.4 L594.0 363.3 L595.2 368.1 L596.4 368.8 L597.6 371.6 L598.8 375.0 L600.0 375.0 L601.2 380.9 L602.4 382.5 L603.6 384.3 L604.8 387.1 L606.0 390.1 L607.2 391.0 L608.4 395.1 L609.6 403.0 L610.8 410.2 L612.0 418.7 L613.2 427.2 L614.4 430.9 L615.6 441.6 L616.8 445.5 L618.0 455.3 L619.2 457.8 L620.4 461.1 L621.6 462.7 L622.8 467.1 L624.0 467.5 L625.2 471.7 L626.4 474.9 L627.6 478.3 L628.8 479.5 L630.0 482.0 L631.2 484.2 L632.0 485.7 L648.0 485.7 L648.0 485.7 L649.2 479.8 L650.4 479.6 L651.6 471.1 L652.8 470.5 L654.0 464.2 L655.2 459.0 L656.4 455.6 L657.6 452.4 L658.8 445.6 L660.0 444.5 L661.2 439.9 L662.4 432.6 L663.6 430.6 L664.8 425.2 L666.0 423.8 L667.2 424.8 L668.4 424.4 L669.6 424.6 L670.8 424.5 L672.0 423.4 L673.2 423.7 L674.4 424.4 L675.6 423.7 L676.8 425.3 L678.0 425.5 L679.2 423.7 L680.4 419.7 L681.6 416.8 L682.8 416.4 L684.0 416.5 L685.2 412.9 L686.4 409.7 L687.6 407.9 L688.8 406.0 L690.0 403.0 L691.2 401.0 L692.4 401.4 L693.6 397.4 L694.8 396.6 L696.0 393.5 L697.2 390.3 L698.4 387.6 L699.6 386.8 L700.8 386.0 L702.0 383.8 L703.2 380.8 L704.4 380.3 L705.6 377.3 L706.8 374.5 L708.0 372.1 L709.2 371.3 L710.4 368.6 L711.6 365.4 L712.8 364.5 L714.0 364.6 L715.2 360.5 L716.4 358.4 L717.6 358.0 L718.8 357.6 L720.0 359.2 L721.2 356.3 L722.4 357.1 L723.6 358.2 L724.8 357.3 L726.0 357.5 L727.2 358.5 L728.4 360.4 L729.6 360.6 L730.8 355.4 L732.0 358.8 L733.2 357.9 L734.4 357.0 L735.6 359.3 L736.8 360.2 L738.0 365.1 L739.2 366.0 L740.4 371.5 L741.6 371.0 L742.8 373.7 L744.0 376.6 L745.2 379.2 L746.4 381.9 L747.6 383.8 L748.8 386.3 L750.0 390.9 L751.2 391.3 L752.4 398.3 L753.6 406.2 L754.8 415.8 L756.0 424.2 L757.2 434.2 L758.4 442.6 L759.6 452.7 L760.8 457.7 L762.0 457.9 L763.2 460.7 L764.4 463.0 L765.6 464.9 L766.8 469.3 L768.0 469.5 L769.2 476.2 L770.4 479.2 L771.6 484.2 L772.0 485.7 L787.0 485.7 L787.0 485.7 L788.2 481.6 L789.4 478.5 L790.6 472.5 L791.8 468.2 L793.0 464.6 L794.2 460.2 L795.4 459.1 L796.6 453.1 L797.8 449.2 L799.0 447.1 L800.2 440.9 L801.4 436.9 L802.6 434.4 L803.8 429.7 L805.0 424.6 L806.2 424.1 L807.4 423.9 L808.6 425.9 L809.8 425.8 L811.0 425.2 L812.2 424.8 L813.4 425.3 L814.6 424.9 L815.8 423.9 L817.0 424.0 L818.2 424.2 L819.4 423.5 L820.6 420.7 L821.8 417.5 L823.0 415.1 L824.2 412.8 L825.4 412.9 L826.6 410.2 L827.8 408.9 L829.0 408.7 L830.2 404.6 L831.4 403.2 L832.6 397.8 L833.8 396.7 L835.0 395.8 L836.2 392.9 L837.4 390.4 L838.6 386.9 L839.8 385.9 L841.0 383.0 L842.2 382.0 L843.4 379.0 L844.6 376.8 L845.8 375.2 L847.0 374.1 L848.2 370.9 L849.4 370.4 L850.6 366.4 L851.8 366.1 L853.0 364.4 L854.2 361.7 L855.4 364.1 L856.6 363.5 L857.8 364.8 L859.0 364.4 L860.2 364.1 L861.4 364.7 L862.6 362.4 L863.8 364.5 L865.0 365.0 L866.2 362.5 L867.4 362.9 L868.6 366.2 L869.8 364.3 L871.0 362.6 L872.2 364.5 L873.4 364.8 L874.6 367.2 L875.8 371.8 L877.0 372.8 L878.2 373.4 L879.4 375.2 L880.6 379.2 L881.8 381.7 L883.0 383.4 L884.2 386.3 L885.4 388.4 L886.6 392.3 L887.8 393.7 L889.0 400.4 L890.2 408.5 L891.4 418.9 L892.6 424.5 L893.8 433.4 L895.0 441.5 L896.2 451.6 L897.4 456.4 L898.6 461.7 L899.8 466.4 L901.0 467.3 L902.2 471.0 L903.4 474.1 L904.6 476.1 L905.8 478.4 L907.0 479.3 L908.2 481.7 L909.4 484.7 L910.0 485.7 L927.0 485.7 L927.0 485.7 L928.2 480.5 L929.4 474.9 L930.6 473.5 L931.8 468.6 L933.0 463.6 L934.2 461.2 L935.4 454.2 L936.6 449.2 L937.8 447.9 L939.0 443.1 L940.2 436.9 L941.4 432.1 L942.6 430.9 L943.8 427.1 L945.0 427.9 L946.2 429.7 L947.4 428.2 L948.6 428.3 L949.8 427.6 L951.0 427.7 L952.2 428.0 L953.4 427.9 L954.6 427.9 L955.8 427.2 L957.0 426.7 L958.2 424.7 L959.4 424.6 L960.6 422.4 L961.8 420.3 L963.0 416.0 L964.2 414.9 L965.4 414.2 L966.6 412.6 L967.8 410.4 L969.0 407.2 L970.2 406.4 L971.4 403.1 L972.6 399.6 L973.8 399.3 L975.0 396.1 L976.2 396.5 L977.4 392.5 L978.6 390.5 L979.8 389.8 L981.0 385.2 L982.2 384.7 L983.4 383.3 L984.6 380.9 L985.8 377.5 L987.0 377.9 L988.2 374.2 L989.4 373.4 L990.6 371.1 L991.8 371.9 L993.0 371.4 L994.2 370.5 L995.4 371.3 L996.6 370.7 L997.8 370.6 L999.0 370.9 L1000.2 371.1 L1001.4 371.3 L1002.6 370.6 L1003.8 370.0 L1005.0 369.4 L1006.2 369.4 L1007.4 372.4 L1008.6 372.0 L1009.8 373.9 L1011.0 375.2 L1012.2 377.4 L1013.4 382.2 L1014.6 382.4 L1015.8 386.6 L1017.0 387.4 L1018.2 389.9 L1019.4 391.7 L1020.6 391.4 L1021.8 395.8 L1023.0 397.8 L1024.2 404.8 L1025.4 411.6 L1026.6 422.2 L1027.8 426.4 L1029.0 436.7 L1030.2 444.7 L1031.4 451.2 L1032.6 456.3 L1033.8 457.8 L1035.0 463.4 L1036.2 468.6 L1037.4 471.9 L1038.6 476.0 L1039.8 477.2 L1041.0 479.9 L1042.2 483.7 L1043.0 485.7 L1065.0 485.7 L1065.0 485.7 L1066.2 482.0 L1067.4 478.3 L1068.6 473.7 L1069.8 470.6 L1071.0 463.6 L1072.2 461.5 L1073.4 456.4 L1074.6 450.8 L1075.8 446.1 L1077.0 442.4 L1078.2 441.8 L1079.4 435.5 L1080.6 431.4 L1081.8 427.5 L1083.0 423.4 L1084.2 419.0 L1085.4 414.9 L1086.6 416.1 L1087.8 417.0 L1089.0 417.3 L1090.2 415.4 L1091.4 417.4 L1092.6 414.8 L1093.8 416.1 L1095.0 416.1 L1096.2 413.0 L1097.4 411.3 L1098.6 407.8 L1099.8 407.6 L1101.0 405.9 L1102.2 399.5 L1103.4 399.1 L1104.6 399.7 L1105.8 392.8 L1107.0 393.8 L1108.2 387.7 L1109.4 385.7 L1110.6 384.3 L1111.8 382.9 L1113.0 381.5 L1114.2 377.3 L1115.4 376.4 L1116.6 372.5 L1117.8 371.6 L1119.0 370.7 L1120.2 367.4 L1121.4 364.2 L1122.6 362.5 L1123.8 359.5 L1125.0 358.3 L1126.2 353.3 L1127.4 353.2 L1128.6 350.9 L1129.8 353.3 L1131.0 350.6 L1132.2 349.8 L1133.4 350.8 L1134.6 351.8 L1135.8 352.5 L1137.0 350.8 L1138.2 350.9 L1139.4 352.9 L1140.6 351.5 L1141.8 350.9 L1143.0 352.3 L1144.2 350.8 L1145.4 351.8 L1146.6 349.9 L1147.8 354.3 L1149.0 354.6 L1150.2 357.2 L1151.4 361.5 L1152.6 362.7 L1153.8 364.8 L1155.0 365.1 L1156.2 368.7 L1157.4 370.5 L1158.6 372.6 L1159.8 372.1 L1161.0 377.4 L1162.2 378.2 L1163.4 388.8 L1164.6 398.7 L1165.8 406.2 L1167.0 414.9 L1168.2 422.3 L1169.4 431.8 L1170.6 439.5 L1171.8 444.8 L1173.0 454.9 L1174.2 458.0 L1175.4 459.5 L1176.6 466.4 L1177.8 467.1 L1179.0 471.4 L1180.2 473.9 L1181.4 476.7 L1182.6 477.9 L1183.8 478.8 L1185.0 480.9 L1186.2 484.3 L1187.0 485.7 L1205.0 485.7 L1205.0 485.7 L1206.2 484.2 L1207.4 475.3 L1208.6 469.6 L1209.8 466.6 L1211.0 463.2 L1212.2 457.8 L1213.4 451.9 L1214.6 449.9 L1215.8 443.9 L1217.0 438.7 L1218.2 435.8 L1219.4 427.8 L1220.6 426.9 L1221.8 426.0 L1223.0 428.9 L1224.2 427.5 L1225.4 426.1 L1226.6 427.3 L1227.8 426.4 L1229.0 429.7 L1230.2 427.8 L1231.4 429.9 L1232.6 428.3 L1233.8 426.0 L1235.0 424.4 L1236.2 423.5 L1237.4 419.8 L1238.6 417.3 L1239.8 416.0 L1241.0 412.9 L1242.2 410.5 L1243.4 408.3 L1244.6 407.9 L1245.8 404.9 L1247.0 404.0 L1248.2 401.3 L1249.4 398.0 L1250.6 397.2 L1251.8 395.5 L1253.0 393.5 L1254.2 390.2 L1255.4 387.0 L1256.6 385.6 L1257.8 384.8 L1259.0 381.6 L1260.2 379.3 L1261.4 376.7 L1262.6 376.9 L1263.8 373.4 L1265.0 372.4 L1266.2 370.5 L1267.4 366.5 L1268.6 366.1 L1269.8 366.5 L1271.0 365.0 L1272.2 366.2 L1273.4 367.2 L1274.6 365.2 L1275.8 367.0 L1277.0 366.9 L1278.2 366.3 L1279.4 365.9 L1280.6 364.7 L1281.8 365.9 L1283.0 367.3 L1284.2 365.9 L1285.4 365.6 L1286.6 368.1 L1287.8 370.1 L1289.0 373.3 L1290.2 374.5 L1291.4 375.5 L1292.6 377.5 L1293.8 381.1 L1295.0 383.0 L1296.2 385.3 L1297.4 385.4 L1298.6 389.2 L1299.8 390.7 L1301.0 393.4 L1302.2 396.4 L1303.4 402.9 L1304.6 409.1 L1305.8 418.0 L1307.0 423.4 L1308.2 432.1 L1309.4 438.6 L1310.6 444.0 L1311.8 451.6 L1313.0 461.0 L1314.2 464.5 L1315.4 468.0 L1316.6 470.3 L1317.8 476.3 L1319.0 478.3 L1320.2 481.0 L1321.4 484.1 L1322.0 485.7" fill="none" stroke="#ff5a14" stroke-width="1.15" stroke-linejoin="round"/>
<line x1="498.0" x2="498.0" y1="350.0" y2="485.7" stroke="#ff5a14" stroke-width="1.3"/>
<path d="M498.0 525.3 V661.3 H510 V525.3 H630.5 V661.3 H648 V525.3 H770 V661.3 H787 V525.3 H909 V661.3 H927 V525.3 H1048 V661.3 H1066 V525.3 H1187.5 V661.3 H1205 V525.3 H1322.5" fill="none" stroke="#2f8007" stroke-width="1.6" stroke-opacity="0.55"/>
</svg>
<div class="a" style="left:498px;top:141px;width:86.5px;height:24.30000000000001px;background:#fff;border:1px solid #e3e3e3;border-radius:2px"></div><div class="a" style="left:502px;top:147.95000000000002px;width:10.4px;height:10.4px;border-radius:50%;background:#c4005a"></div><div class="t" style="left:516.5px;top:144.15px;line-height:18px;font-size:10.3px;color:#555;letter-spacing:-0.35px;">BA:TEMP.1</div><svg class="a" style="left:568.3px;top:146.15px" width="14" height="14" viewBox="-7 -7 14 14"><path d="M-4.6 0 H4.6 M0 -4.6 V4.6" stroke="#333" stroke-width="1.1"/><path d="M0 -6 L-2.2 -3.6 H2.2Z M0 6 L-2.2 3.6 H2.2Z M-6 0 L-3.6 -2.2 V2.2Z M6 0 L3.6 -2.2 V2.2Z" fill="#333"/></svg>
<div class="a" style="left:588.7px;top:141px;width:89.89999999999998px;height:24.30000000000001px;background:#fff;border:1px solid #e3e3e3;border-radius:2px"></div><div class="a" style="left:592.7px;top:147.95000000000002px;width:10.4px;height:10.4px;border-radius:50%;background:#21436b"></div><div class="t" style="left:607.2px;top:144.15px;line-height:18px;font-size:10.3px;color:#555;letter-spacing:-0.35px;">BA:CONC.1</div><svg class="a" style="left:662px;top:146.15px" width="14" height="14" viewBox="-7 -7 14 14"><path d="M-4.6 0 H4.6 M0 -4.6 V4.6" stroke="#333" stroke-width="1.1"/><path d="M0 -6 L-2.2 -3.6 H2.2Z M0 6 L-2.2 3.6 H2.2Z M-6 0 L-3.6 -2.2 V2.2Z M6 0 L3.6 -2.2 V2.2Z" fill="#333"/></svg>
<div class="a" style="left:498px;top:318px;width:60.299999999999955px;height:24px;background:#fff;border:1px solid #e3e3e3;border-radius:2px"></div><div class="a" style="left:502px;top:324.8px;width:10.4px;height:10.4px;border-radius:50%;background:#ff4f00"></div><div class="t" style="left:516.5px;top:321.0px;line-height:18px;font-size:10.3px;color:#555;letter-spacing:-0.35px;">Level</div><svg class="a" style="left:541.5px;top:323.0px" width="14" height="14" viewBox="-7 -7 14 14"><path d="M-4.6 0 H4.6 M0 -4.6 V4.6" stroke="#333" stroke-width="1.1"/><path d="M0 -6 L-2.2 -3.6 H2.2Z M0 6 L-2.2 3.6 H2.2Z M-6 0 L-3.6 -2.2 V2.2Z M6 0 L3.6 -2.2 V2.2Z" fill="#333"/></svg>
<div class="a" style="left:498px;top:494px;width:72px;height:23.299999999999955px;background:#fff;border:1px solid #e3e3e3;border-radius:2px"></div><div class="a" style="left:502px;top:500.45px;width:10.4px;height:10.4px;border-radius:50%;background:#2f8007"></div><div class="t" style="left:516.5px;top:496.65px;line-height:18px;font-size:10.3px;color:#555;letter-spacing:-0.35px;">ACTIVE</div><svg class="a" style="left:554px;top:498.65px" width="14" height="14" viewBox="-7 -7 14 14"><path d="M-4.6 0 H4.6 M0 -4.6 V4.6" stroke="#333" stroke-width="1.1"/><path d="M0 -6 L-2.2 -3.6 H2.2Z M0 6 L-2.2 3.6 H2.2Z M-6 0 L-3.6 -2.2 V2.2Z M6 0 L3.6 -2.2 V2.2Z" fill="#333"/></svg>
<div class="a" style="left:498.5px;top:690px;width:31.5px;height:32px;background:#fff;border:1px solid #e0e0e0;border-radius:4px"></div>
<svg class="a" style="left:508px;top:700px" width="12" height="12"><path d="M3.5 6 L7.4 2.8 V9.2Z" fill="#444"/></svg>
<div class="a" style="left:535px;top:690px;width:32px;height:32px;background:#fff;border:1px solid #e0e0e0;border-radius:4px"></div>
<svg class="a" style="left:541px;top:696px" width="20" height="20" viewBox="541 696 20 20"><rect x="544.2" y="699.2" width="13.6" height="13.4" fill="none" stroke="#888" stroke-width="1.1"/><path d="M544.2 703.2 H557.8" stroke="#888" stroke-width="1.1"/><circle cx="548" cy="699.3" r="1.1" fill="#888"/><circle cx="554" cy="699.3" r="1.1" fill="#888"/><rect x="552.5" y="707.5" width="3.4" height="3.4" fill="#888"/></svg>
<div class="a" style="left:571.5px;top:690px;width:32.5px;height:32px;background:#fff;border:1px solid #d3dbe4;border-radius:4px"></div>
<svg class="a" style="left:578px;top:696px" width="20" height="20" viewBox="578 696 20 20"><circle cx="587.8" cy="705.8" r="6.6" fill="none" stroke="#888" stroke-width="1.1"/><path d="M587.5 701.2 V706.3 H591.2" fill="none" stroke="#888" stroke-width="1.1"/></svg>
<div class="a" style="left:823px;top:690px;width:31px;height:31.5px;background:#fff;border:1px solid #e0e0e0;border-radius:4px"></div>
<svg class="a" style="left:828px;top:695px" width="22" height="22" viewBox="828 695 22 22"><path d="M830.3 698.5 V714.5 H846.6" fill="none" stroke="#777" stroke-width="1.1"/><path d="M831.5 706.5 Q834 701 839 701.5 Q842.5 701.5 844.2 699.5" fill="none" stroke="#777" stroke-width="1.1"/><path d="M831.5 705.6 H845.2" stroke="#777" stroke-width="1"/><path d="M831.5 713.5 H834 L835.5 711.2 H838 L839.5 709 H842 L843.5 707 H845.5" fill="none" stroke="#888" stroke-width="1"/></svg>
<div class="a" style="left:858.5px;top:690px;width:103.0px;height:31.5px;background:#fff;border:1px solid #e0e0e0;border-radius:4px"></div>
<div class="vd" style="left:930.5px;top:690px;height:31.5px;background:#e0e0e0"></div>
<div class="t" style="left:872px;top:697.0px;line-height:18px;font-size:13.7px;color:#333;">8 hours</div>
<svg class="a" style="left:937px;top:697px" width="18" height="18" viewBox="937 697 18 18"><rect x="940.6" y="704.3" width="9.8" height="8.2" rx="1.2" fill="none" stroke="#555" stroke-width="1.3"/><path d="M942.6 704.3 V701.6 Q942.6 699 945.2 699 Q947.8 699 947.8 701.3" fill="none" stroke="#555" stroke-width="1.3"/><circle cx="945.5" cy="708.5" r="1" fill="#555"/></svg>
<div class="a" style="left:966.5px;top:690px;width:31.0px;height:31.5px;background:#fff;border:1px solid #e0e0e0;border-radius:4px"></div>
<svg class="a" style="left:973px;top:697px" width="18" height="18" viewBox="973 697 18 18"><path d="M976.3 705.6 A6 6 0 1 1 978.4 710.4" fill="none" stroke="#555" stroke-width="1.3"/><path d="M974 704.6 L976.4 707.6 L978.8 704.6Z" fill="#555"/><path d="M982.3 702.4 V706.2 L985 708" fill="none" stroke="#555" stroke-width="1.2"/></svg>
<div class="a" style="left:1222px;top:690px;width:31.5px;height:32px;background:#fff;border:1px solid #e0e0e0;border-radius:4px"></div>
<svg class="a" style="left:1228px;top:696px" width="20" height="20" viewBox="1228 696 20 20"><rect x="1231" y="699.2" width="13.6" height="13.4" fill="none" stroke="#888" stroke-width="1.1"/><path d="M1231 703.2 H1244.6" stroke="#888" stroke-width="1.1"/><circle cx="1234.8" cy="699.3" r="1.1" fill="#888"/><circle cx="1240.8" cy="699.3" r="1.1" fill="#888"/><rect x="1239.3" y="707.5" width="3.4" height="3.4" fill="#888"/></svg>
<div class="a" style="left:1258.5px;top:690px;width:32.0px;height:32px;background:#fff;border:1px solid #e0e0e0;border-radius:4px"></div>
<svg class="a" style="left:1264px;top:696px" width="20" height="20" viewBox="1264 696 20 20"><circle cx="1274.2" cy="705.8" r="6.6" fill="none" stroke="#888" stroke-width="1.1"/><path d="M1273.9 701.2 V706.3 H1277.6" fill="none" stroke="#888" stroke-width="1.1"/></svg>
<div class="a" style="left:1290px;top:690px;width:31.5px;height:32px;background:#fff;border:1px solid #e0e0e0;border-radius:4px"></div>
<svg class="a" style="left:1300px;top:700px" width="12" height="12"><path d="M8 6 L4.2 2.8 V9.2Z" fill="#444"/></svg>
<div class="a" style="left:499px;top:798px;width:243.5px;height:23.5px;background:#fff;border:1px solid #e0e0e0;border-radius:3px"></div>
<div class="t" style="left:499px;top:801.0px;line-height:18px;font-size:12.6px;color:#444;width:33.200000000000045px;text-align:center;">1D</div>
<div class="vd" style="left:531.7px;top:798px;height:23.5px;background:#e0e0e0"></div>
<div class="t" style="left:532.2px;top:801.0px;line-height:18px;font-size:12.6px;color:#444;width:36.5px;text-align:center;">1W</div>
<div class="vd" style="left:568.2px;top:798px;height:23.5px;background:#e0e0e0"></div>
<div class="t" style="left:568.7px;top:801.0px;line-height:18px;font-size:12.6px;color:#444;width:34.799999999999955px;text-align:center;">1M</div>
<div class="vd" style="left:603.0px;top:798px;height:23.5px;background:#e0e0e0"></div>
<div class="t" style="left:603.5px;top:801.0px;line-height:18px;font-size:12.6px;color:#444;width:35.0px;text-align:center;">3M</div>
<div class="vd" style="left:638.0px;top:798px;height:23.5px;background:#e0e0e0"></div>
<div class="t" style="left:638.5px;top:801.0px;line-height:18px;font-size:12.6px;color:#444;width:35.10000000000002px;text-align:center;">6M</div>
<div class="vd" style="left:673.1px;top:798px;height:23.5px;background:#e0e0e0"></div>
<div class="t" style="left:673.6px;top:801.0px;line-height:18px;font-size:12.6px;color:#444;width:31.799999999999955px;text-align:center;">1Y</div>
<div class="vd" style="left:704.9px;top:798px;height:23.5px;background:#e0e0e0"></div>
<div class="t" style="left:705.4px;top:801.0px;line-height:18px;font-size:12.6px;color:#444;width:37.10000000000002px;text-align:center;">ALL</div>
<div class="a" style="left:759.5px;top:798px;width:103.0px;height:23.5px;background:#fff;border:1px solid #e0e0e0;border-radius:3px"></div>
<div class="a" style="left:760.5px;top:799px;width:78px;height:21.5px;background:#eef3f9"></div>
<div class="vd" style="left:838.5px;top:798px;height:23.5px;background:#e0e0e0"></div>
<div class="t" style="left:768.5px;top:801.0px;line-height:18px;font-size:11.6px;color:#1f62b5;">CUSTOM</div>
<svg class="a" style="left:824px;top:806px" width="10" height="6"><path d="M1 5 L5 1 L9 5Z" fill="#9fb0c4"/></svg>
<svg class="a" style="left:844px;top:803px" width="14" height="14" viewBox="844 803 14 14"><rect x="845.8" y="805.2" width="10.4" height="9.6" rx="1.5" fill="none" stroke="#888" stroke-width="1.3"/><path d="M847.6 807 H850 L847.6 809.4Z M854.4 807 H852 L854.4 809.4Z M847.6 813 H850 L847.6 810.6Z M854.4 813 H852 L854.4 810.6Z" fill="#888"/></svg>
<svg class="a" style="left:490px;top:725px" width="840" height="70" viewBox="490 725 840 70" font-family="Liberation Sans">
<rect x="498.0" y="730.0" width="823.0" height="30.0" fill="#f7f7f7"/>
<line x1="498.0" x2="1321.0" y1="759.5" y2="759.5" stroke="#e6e6e6"/>
<path d="M498.0 759.0 V731.0 H514.6 V759.0 M519.1 759.0 V731.0 H551.1 V759.0 M555.8 759.0 V731.0 H587.6 V759.0 M592.3 759.0 V731.0 H624.2 V759.0 M628.8 759.0 V731.0 H660.5 V759.0 M666.9 759.0 V731.0 H698.5 V759.0 M703.1 759.0 V731.0 H735.1 V759.0 M739.6 759.0 V731.0 H771.6 V759.0 M776.3 759.0 V731.0 H808.1 V759.0 M812.8 759.0 V731.0 H844.7 V759.0 M849.3 759.0 V731.0 H881.0 V759.0 M887.3 759.0 V731.0 H919.0 V759.0 M923.6 759.0 V731.0 H955.6 V759.0 M960.1 759.0 V731.0 H992.1 V759.0 M996.8 759.0 V731.0 H1028.6 V759.0 M1033.3 759.0 V731.0 H1065.2 V759.0 M1069.8 759.0 V731.0 H1101.5 V759.0 M1107.8 759.0 V731.0 H1139.5 V759.0 M1144.1 759.0 V731.0 H1176.1 V759.0 M1180.6 759.0 V731.0 H1212.6 V759.0 M1217.3 759.0 V731.0 H1249.1 V759.0 M1253.8 759.0 V731.0 H1285.7 V759.0 M1290.3 759.0 V731.0 H1321.0 V759.0 " fill="none" stroke="#4d9030" stroke-width="1.5"/>
<path d="M500.7 737.2 L505.4 737.2 L509.9 743.4 L512.0 753.8 L514.1 756.4 L515.1 759.0 M519.1 759.0 L523.8 748.6 L527.2 748.6 L536.4 738.2 L541.6 738.2 L545.6 743.4 L547.9 753.8 L549.5 756.9 L551.4 759.0 M555.8 759.0 L560.0 749.1 L563.7 749.1 L572.4 739.5 L577.1 739.5 L581.0 743.9 L583.4 753.8 L584.9 756.9 L586.3 759.0 M592.0 759.0 L597.3 747.0 L599.9 747.0 L608.6 736.1 L613.6 736.1 L617.5 740.8 L620.4 753.8 L622.2 756.9 L624.1 759.0 M628.8 759.0 L632.7 749.1 L636.1 749.1 L645.3 738.7 L649.8 738.5 L654.2 743.4 L657.1 754.8 L659.5 759.0 M663.7 759.0 L666.6 759.0 L670.8 749.5 L673.9 749.6 L684.4 737.9 L688.6 737.9 L692.6 743.4 L695.2 753.8 L697.6 757.4 L698.9 759.0 M703.1 759.0 L707.5 748.6 L710.9 748.6 L721.2 737.2 L725.9 737.2 L730.4 743.4 L732.5 753.8 L734.6 756.4 L735.6 759.0 M739.6 759.0 L744.3 748.6 L747.7 748.6 L756.9 738.2 L762.1 738.2 L766.1 743.4 L768.4 753.8 L770.0 756.9 L771.9 759.0 M776.3 759.0 L780.5 749.1 L784.2 749.1 L792.9 739.5 L797.6 739.5 L801.5 743.9 L803.9 753.8 L805.4 756.9 L806.8 759.0 M812.5 759.0 L817.8 747.0 L820.4 747.0 L829.1 736.1 L834.1 736.1 L838.0 740.8 L840.9 753.8 L842.7 756.9 L844.6 759.0 M849.3 759.0 L853.2 749.1 L856.6 749.1 L865.8 738.7 L870.3 738.5 L874.8 743.4 L877.6 754.8 L880.0 759.0 M884.2 759.0 L887.1 759.0 L891.3 749.5 L894.4 749.6 L904.9 737.9 L909.1 737.9 L913.1 743.4 L915.7 753.8 L918.1 757.4 L919.4 759.0 M923.6 759.0 L928.0 748.6 L931.5 748.6 L941.7 737.2 L946.4 737.2 L950.9 743.4 L953.0 753.8 L955.1 756.4 L956.1 759.0 M960.1 759.0 L964.8 748.6 L968.2 748.6 L977.4 738.2 L982.6 738.2 L986.6 743.4 L988.9 753.8 L990.5 756.9 L992.3 759.0 M996.8 759.0 L1001.0 749.1 L1004.7 749.1 L1013.3 739.5 L1018.1 739.5 L1022.0 743.9 L1024.4 753.8 L1026.0 756.9 L1027.3 759.0 M1033.0 759.0 L1038.3 747.0 L1040.9 747.0 L1049.6 736.1 L1054.6 736.1 L1058.5 740.8 L1061.4 753.8 L1063.2 756.9 L1065.1 759.0 M1069.8 759.0 L1073.7 749.1 L1077.1 749.1 L1086.3 738.7 L1090.8 738.5 L1095.2 743.4 L1098.1 754.8 L1100.5 759.0 M1104.7 759.0 L1107.6 759.0 L1111.8 749.5 L1114.9 749.6 L1125.4 737.9 L1129.6 737.9 L1133.6 743.4 L1136.2 753.8 L1138.6 757.4 L1139.9 759.0 M1144.1 759.0 L1148.5 748.6 L1152.0 748.6 L1162.2 737.2 L1166.9 737.2 L1171.4 743.4 L1173.5 753.8 L1175.6 756.4 L1176.6 759.0 M1180.6 759.0 L1185.3 748.6 L1188.7 748.6 L1197.9 738.2 L1203.1 738.2 L1207.1 743.4 L1209.4 753.8 L1211.0 756.9 L1212.8 759.0 M1217.3 759.0 L1221.5 749.1 L1225.2 749.1 L1233.8 739.5 L1238.6 739.5 L1242.5 743.9 L1244.9 753.8 L1246.5 756.9 L1247.8 759.0 M1253.5 759.0 L1258.8 747.0 L1261.4 747.0 L1270.1 736.1 L1275.1 736.1 L1279.0 740.8 L1281.9 753.8 L1283.7 756.9 L1285.6 759.0 M1290.3 759.0 L1294.2 749.1 L1297.6 749.1 L1306.8 738.7 L1311.3 738.5 L1315.8 743.4 L1318.6 754.8 L1321.0 759.0" fill="none" stroke="#ff5a14" stroke-width="1.3"/>
<path d="M499.6 747.3 L503.6 733.0 L507.8 745.0 L511.2 753.8 L513.0 756.9 L514.6 759.0 M519.1 759.0 L523.5 747.7 L535.1 747.3 L539.2 732.0 L541.4 738.7 L545.8 753.8 L548.7 756.9 L551.1 759.0 M555.8 759.0 L560.0 748.6 L574.2 748.1 L577.6 734.0 L580.8 744.4 L583.6 753.8 L585.5 756.9 L587.3 759.0 M592.3 759.0 L596.5 749.4 L608.8 749.2 L613.0 735.1 L615.9 745.5 L618.5 753.8 L620.1 756.9 L621.7 759.0 M628.8 759.0 L633.5 747.0 L644.8 746.9 L648.7 732.0 L651.6 742.4 L654.5 750.5 L657.9 754.2 L659.5 756.6 M666.9 759.0 L671.0 747.8 L683.4 747.7 L687.6 732.0 L689.4 735.7 L694.4 750.5 L698.4 755.4 L698.5 759.0 M703.1 759.0 L708.1 747.0 L720.1 747.3 L724.1 733.0 L728.3 745.0 L731.7 753.8 L733.5 756.9 L735.1 759.0 M739.6 759.0 L744.0 747.7 L755.6 747.3 L759.7 732.0 L761.9 738.7 L766.3 753.8 L769.2 756.9 L771.6 759.0 M776.3 759.0 L780.5 748.6 L794.7 748.1 L798.1 734.0 L801.2 744.4 L804.1 753.8 L806.0 756.9 L807.8 759.0 M812.8 759.0 L817.0 749.4 L829.3 749.2 L833.5 735.1 L836.4 745.5 L839.0 753.8 L840.6 756.9 L842.2 759.0 M849.3 759.0 L854.0 747.0 L865.3 746.9 L869.2 732.0 L872.1 742.4 L875.0 750.5 L878.4 754.2 L880.0 756.6 M887.3 759.0 L891.5 747.8 L903.9 747.7 L908.1 732.0 L909.9 735.7 L914.9 750.5 L918.9 755.4 L919.0 759.0 M923.6 759.0 L928.6 747.0 L940.6 747.3 L944.6 733.0 L948.8 745.0 L952.2 753.8 L954.0 756.9 L955.6 759.0 M960.1 759.0 L964.5 747.7 L976.1 747.3 L980.2 732.0 L982.4 738.7 L986.8 753.8 L989.7 756.9 L992.1 759.0 M996.8 759.0 L1001.0 748.6 L1015.2 748.1 L1018.6 734.0 L1021.8 744.4 L1024.6 753.8 L1026.5 756.9 L1028.3 759.0 M1033.3 759.0 L1037.5 749.4 L1049.8 749.2 L1054.0 735.1 L1056.9 745.5 L1059.5 753.8 L1061.1 756.9 L1062.7 759.0 M1069.8 759.0 L1074.5 747.0 L1085.8 746.9 L1089.7 732.0 L1092.6 742.4 L1095.5 750.5 L1098.9 754.2 L1100.5 756.6 M1107.8 759.0 L1112.0 747.8 L1124.4 747.7 L1128.6 732.0 L1130.4 735.7 L1135.4 750.5 L1139.4 755.4 L1139.5 759.0 M1144.1 759.0 L1149.1 747.0 L1161.1 747.3 L1165.1 733.0 L1169.3 745.0 L1172.7 753.8 L1174.5 756.9 L1176.1 759.0 M1180.6 759.0 L1185.0 747.7 L1196.6 747.3 L1200.7 732.0 L1202.9 738.7 L1207.3 753.8 L1210.2 756.9 L1212.6 759.0 M1217.3 759.0 L1221.5 748.6 L1235.7 748.1 L1239.1 734.0 L1242.2 744.4 L1245.1 753.8 L1247.0 756.9 L1248.8 759.0 M1253.8 759.0 L1258.0 749.4 L1270.3 749.2 L1274.5 735.1 L1277.4 745.5 L1280.0 753.8 L1281.6 756.9 L1283.2 759.0 M1290.3 759.0 L1295.0 747.0 L1306.3 746.9 L1310.2 732.0 L1313.1 742.4 L1316.0 750.5 L1319.4 754.2 L1321.0 756.6" fill="none" stroke="#c4005a" stroke-width="1.1"/>
<path d="M500.7 746.5 L502.8 742.4 L504.9 738.2 L509.3 737.2 L514.1 736.1 L514.6 759.0 M514.6 759.0 L519.1 759.0 L522.5 755.4 L525.4 753.3 L528.2 748.8 L537.4 747.0 L539.5 743.4 L541.6 740.0 L546.4 738.2 L550.8 737.2 L551.1 759.0 M551.1 759.0 L555.8 759.0 L559.2 754.3 L561.9 750.7 L564.5 748.6 L574.2 747.6 L577.1 742.4 L580.2 737.2 L584.2 736.4 L587.3 735.6 L587.6 759.0 M587.6 759.0 L592.3 759.0 L595.4 754.3 L598.6 750.7 L602.0 748.1 L609.1 747.0 L613.0 741.8 L617.5 736.6 L620.9 736.1 L624.1 735.6 L624.2 759.0 M624.2 759.0 L628.8 759.0 L631.4 754.8 L634.3 751.7 L637.2 749.1 L644.8 747.8 L647.4 747.1 L649.5 742.9 L651.6 738.2 L656.4 737.4 L659.5 736.8 M663.7 759.0 L666.9 759.0 L668.9 756.1 L672.4 752.8 L676.6 749.5 L683.1 748.3 L685.2 745.0 L688.4 739.8 L693.1 738.2 L698.4 737.2 L698.5 759.0 M698.5 759.0 L703.1 759.0 L706.2 754.8 L708.9 751.7 L712.3 748.1 L721.2 746.5 L723.3 742.4 L725.4 738.2 L729.9 737.2 L734.6 736.1 L735.1 759.0 M735.1 759.0 L739.6 759.0 L743.0 755.4 L745.9 753.3 L748.8 748.8 L757.9 747.0 L760.0 743.4 L762.1 740.0 L766.9 738.2 L771.3 737.2 L771.6 759.0 M771.6 759.0 L776.3 759.0 L779.7 754.3 L782.4 750.7 L785.0 748.6 L794.7 747.6 L797.6 742.4 L800.7 737.2 L804.7 736.4 L807.8 735.6 L808.1 759.0 M808.1 759.0 L812.8 759.0 L816.0 754.3 L819.1 750.7 L822.5 748.1 L829.6 747.0 L833.5 741.8 L838.0 736.6 L841.4 736.1 L844.6 735.6 L844.7 759.0 M844.7 759.0 L849.3 759.0 L851.9 754.8 L854.8 751.7 L857.7 749.1 L865.3 747.8 L867.9 747.1 L870.0 742.9 L872.1 738.2 L876.8 737.4 L880.0 736.8 M884.2 759.0 L887.3 759.0 L889.5 756.1 L892.9 752.8 L897.1 749.5 L903.6 748.3 L905.7 745.0 L908.9 739.8 L913.6 738.2 L918.8 737.2 L919.0 759.0 M919.0 759.0 L923.6 759.0 L926.7 754.8 L929.3 751.7 L932.8 748.1 L941.7 746.5 L943.8 742.4 L945.9 738.2 L950.3 737.2 L955.1 736.1 L955.6 759.0 M955.6 759.0 L960.1 759.0 L963.5 755.4 L966.4 753.3 L969.2 748.8 L978.4 747.0 L980.5 743.4 L982.6 740.0 L987.4 738.2 L991.8 737.2 L992.1 759.0 M992.1 759.0 L996.8 759.0 L1000.2 754.3 L1002.8 750.7 L1005.5 748.6 L1015.2 747.6 L1018.1 742.4 L1021.2 737.2 L1025.2 736.4 L1028.3 735.6 L1028.6 759.0 M1028.6 759.0 L1033.3 759.0 L1036.5 754.3 L1039.6 750.7 L1043.0 748.1 L1050.1 747.0 L1054.0 741.8 L1058.5 736.6 L1061.9 736.1 L1065.1 735.6 L1065.2 759.0 M1065.2 759.0 L1069.8 759.0 L1072.4 754.8 L1075.3 751.7 L1078.2 749.1 L1085.8 747.8 L1088.4 747.1 L1090.5 742.9 L1092.6 738.2 L1097.3 737.4 L1100.5 736.8 M1104.7 759.0 L1107.8 759.0 L1110.0 756.1 L1113.4 752.8 L1117.6 749.5 L1124.1 748.3 L1126.2 745.0 L1129.4 739.8 L1134.1 738.2 L1139.3 737.2 L1139.5 759.0 M1139.5 759.0 L1144.1 759.0 L1147.2 754.8 L1149.8 751.7 L1153.3 748.1 L1162.2 746.5 L1164.3 742.4 L1166.4 738.2 L1170.8 737.2 L1175.6 736.1 L1176.1 759.0 M1176.1 759.0 L1180.6 759.0 L1184.0 755.4 L1186.9 753.3 L1189.8 748.8 L1198.9 747.0 L1201.0 743.4 L1203.1 740.0 L1207.9 738.2 L1212.3 737.2 L1212.6 759.0 M1212.6 759.0 L1217.3 759.0 L1220.7 754.3 L1223.3 750.7 L1226.0 748.6 L1235.7 747.6 L1238.6 742.4 L1241.7 737.2 L1245.7 736.4 L1248.8 735.6 L1249.1 759.0 M1249.1 759.0 L1253.8 759.0 L1257.0 754.3 L1260.1 750.7 L1263.5 748.1 L1270.6 747.0 L1274.5 741.8 L1279.0 736.6 L1282.4 736.1 L1285.6 735.6 L1285.7 759.0 M1285.7 759.0 L1290.3 759.0 L1292.9 754.8 L1295.8 751.7 L1298.7 749.1 L1306.3 747.8 L1308.9 747.1 L1311.0 742.9 L1313.1 738.2 L1317.8 737.4 L1321.0 736.8" fill="none" stroke="#21436b" stroke-width="1.1"/>
<rect x="498.0" y="730.0" width="98.0" height="29.0" fill="#fff" fill-opacity="0.45"/>
<rect x="1079.5" y="730.0" width="24.5" height="29.0" fill="#fff" fill-opacity="0.45"/>
<rect x="596.5" y="731.5" width="284.5" height="26.5" fill="none" stroke="#111" stroke-width="1.2" stroke-dasharray="4.5 3"/>
<rect x="864" y="731.5" width="215" height="26.5" fill="none" stroke="#111" stroke-width="1.2" stroke-dasharray="4.5 3"/>
<rect x="1104.5" y="730.5" width="216.5" height="29.5" fill="#000" fill-opacity="0.05"/>
<rect x="1104.5" y="730.5" width="216.5" height="41.5" rx="3" fill="none" stroke="#333" stroke-width="1.2"/>
<line x1="1104.5" x2="1321" y1="760" y2="760" stroke="#444" stroke-width="1"/>
<rect x="1103" y="737" width="4" height="18" rx="1" fill="#111"/>
<rect x="1318.5" y="737" width="4" height="18" rx="1" fill="#111"/>
<path d="M1210.5 763 V769 M1212.7 763 V769 M1214.9 763 V769" stroke="#999" stroke-width="0.9"/>
<line x1="498.0" x2="1321.5" y1="774.5" y2="774.5" stroke="#7a7a7a" stroke-width="1.4"/>
<line x1="498.0" x2="498.0" y1="774.5" y2="779" stroke="#7a7a7a" stroke-width="1"/>
<line x1="572.8" x2="572.8" y1="774.5" y2="779" stroke="#7a7a7a" stroke-width="1"/>
<line x1="654.4" x2="654.4" y1="774.5" y2="779" stroke="#7a7a7a" stroke-width="1"/>
<line x1="736.0" x2="736.0" y1="774.5" y2="779" stroke="#7a7a7a" stroke-width="1"/>
<line x1="817.6" x2="817.6" y1="774.5" y2="779" stroke="#7a7a7a" stroke-width="1"/>
<line x1="899.2" x2="899.2" y1="774.5" y2="779" stroke="#7a7a7a" stroke-width="1"/>
<line x1="980.8" x2="980.8" y1="774.5" y2="779" stroke="#7a7a7a" stroke-width="1"/>
<line x1="1062.4" x2="1062.4" y1="774.5" y2="779" stroke="#7a7a7a" stroke-width="1"/>
<line x1="1144.0" x2="1144.0" y1="774.5" y2="779" stroke="#7a7a7a" stroke-width="1"/>
<line x1="1225.6" x2="1225.6" y1="774.5" y2="779" stroke="#7a7a7a" stroke-width="1"/>
<line x1="1307.2" x2="1307.2" y1="774.5" y2="779" stroke="#7a7a7a" stroke-width="1"/>
<line x1="1321.0" x2="1321.0" y1="774.5" y2="779" stroke="#7a7a7a" stroke-width="1"/>
<text x="572.8" y="788" font-size="10.4" fill="#444" text-anchor="middle">12 PM</text>
<text x="654.4" y="788" font-size="10.4" fill="#444" text-anchor="middle">03 PM</text>
<text x="736.0" y="788" font-size="10.4" fill="#444" text-anchor="middle">06 PM</text>
<text x="817.6" y="788" font-size="10.4" fill="#444" text-anchor="middle">09 PM</text>
<text x="899.2" y="788" font-size="10.4" fill="#444" text-anchor="middle">Wed, 23</text>
<text x="980.8" y="788" font-size="10.4" fill="#444" text-anchor="middle">03 AM</text>
<text x="1062.4" y="788" font-size="10.4" fill="#444" text-anchor="middle">06 AM</text>
<text x="1144.0" y="788" font-size="10.4" fill="#444" text-anchor="middle">09 AM</text>
<text x="1225.6" y="788" font-size="10.4" fill="#444" text-anchor="middle">12 PM</text>
<text x="1307.2" y="788" font-size="10.4" fill="#444" text-anchor="middle">03 PM</text>
</svg>
<svg class="a" style="left:98px;top:118px" width="344" height="360" viewBox="98 118 344 360"><path d="M103 122.9 H436" stroke="#7000ff" stroke-width="2" stroke-dasharray="12 4" stroke-dashoffset="7.8"/><path d="M435 121.9 V472.7" stroke="#7000ff" stroke-width="2" stroke-dasharray="12 4" stroke-dashoffset="5.7"/><path d="M103.9 121.9 V472.7" stroke="#7000ff" stroke-width="2" stroke-dasharray="12 4" stroke-dashoffset="7.1"/><path d="M103 471.7 H436" stroke="#7000ff" stroke-width="2" stroke-dasharray="12 4" stroke-dashoffset="8.8"/></svg>
<div class="a" style="left:79.8px;top:96.8px;width:156.2px;height:32.3px;background:#7000ff;border-radius:5.5px;box-shadow:0 -0.8px 0 0.2px #fff"></div>
<div class="t" style="left:80px;top:104.0px;line-height:18px;font-size:14.6px;color:#fff;font-weight:bold;width:156px;text-align:center;">Layer details</div>

</body></html>
